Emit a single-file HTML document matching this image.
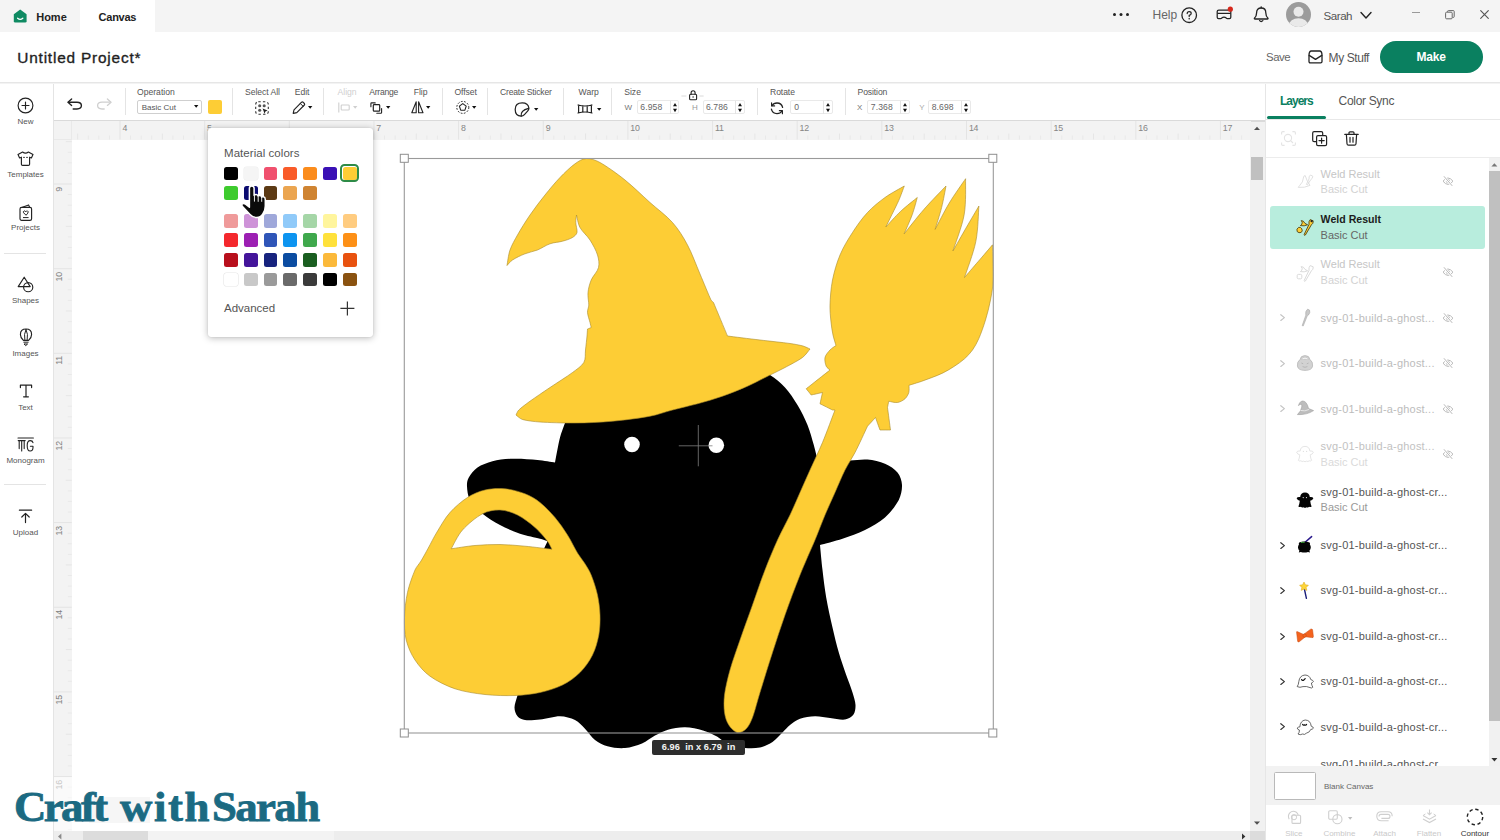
<!DOCTYPE html>
<html lang="en"><head><meta charset="utf-8"><title>Canvas</title>
<style>

html,body{margin:0;padding:0;background:#fff;}
body{width:1500px;height:840px;overflow:hidden;font-family:"Liberation Sans",sans-serif;}
#app{position:relative;width:1500px;height:840px;overflow:hidden;background:#fff;}
#art{position:absolute;left:0;top:0;}
svg{overflow:visible}
.ic{fill:none;stroke-linecap:round;stroke-linejoin:round}

</style></head><body>
<div id="app">
<div style="position:absolute;left:0px;top:0px;width:1500px;height:31.8px;background:#f4f4f4;"></div><div style="position:absolute;left:80px;top:0px;width:75px;height:32px;background:#fff;"></div><svg style="position:absolute;left:13px;top:8.8px;" width="14.5" height="14" viewBox="0 0 14.5 14"><path d="M7.2 0.6 L13.6 5.2 V12.2 Q13.6 13.6 12.2 13.6 H2.2 Q0.8 13.6 0.8 12.2 V5.2 Z" fill="#0f8a62"/><path d="M4.6 9.2 Q7.2 11.6 9.8 9.2" fill="none" stroke="#fff" stroke-width="1.3" stroke-linecap="round"/></svg><div style="position:absolute;left:36.2px;top:11.89px;font-size:11px;line-height:1;color:#222;font-weight:700;white-space:nowrap;">Home</div><div style="position:absolute;left:98.6px;top:11.89px;font-size:11px;line-height:1;color:#222;font-weight:700;white-space:nowrap;letter-spacing:-0.25px;">Canvas</div><svg style="position:absolute;left:1112px;top:12px;" width="18" height="5" viewBox="0 0 18 5"><circle cx="2.5" cy="2.5" r="1.5" fill="#222"/><circle cx="9" cy="2.5" r="1.5" fill="#222"/><circle cx="15.5" cy="2.5" r="1.5" fill="#222"/></svg><div style="position:absolute;left:1152.5px;top:9.34px;font-size:12px;line-height:1;color:#666;font-weight:400;white-space:nowrap;">Help</div><svg style="position:absolute;left:1180.5px;top:6.8px;" width="16.4" height="16.4" viewBox="0 0 16.4 16.4"><circle cx="8.2" cy="8.2" r="7.3" fill="none" stroke="#222" stroke-width="1.3"/><path d="M6.2 6.6 Q6.2 4.6 8.2 4.6 Q10.2 4.6 10.2 6.4 Q10.2 7.6 8.2 8.4 V9.6" fill="none" stroke="#222" stroke-width="1.2" stroke-linecap="round"/><circle cx="8.2" cy="11.7" r="0.8" fill="#222"/></svg><svg style="position:absolute;left:1215.5px;top:6px;" width="18" height="14" viewBox="0 0 18 14"><path d="M1.2 5.6 Q1.2 4 2.8 4 H13.2 Q14.8 4 14.8 5.6 V11.2 Q14.8 12.6 13.4 12.6 H11.6 Q10.6 12.6 10 11.8 Q9.2 11 8 11 Q6.8 11 6 11.8 Q5.4 12.6 4.4 12.6 H2.6 Q1.2 12.6 1.2 11.2 Z" fill="none" stroke="#222" stroke-width="1.25" stroke-linejoin="round"/><path d="M1.4 7.4 H14.6" stroke="#222" stroke-width="1.25"/><circle cx="14.3" cy="3.2" r="2.6" fill="#d6281c"/></svg><svg style="position:absolute;left:1253px;top:6px;" width="16.4" height="17" viewBox="0 0 16.4 17"><path d="M1.4 12.2 Q3.6 10.4 3.6 6.8 Q3.6 2 8.2 2 Q12.8 2 12.8 6.8 Q12.8 10.4 15 12.2 Q15.2 13 14.4 13 H2 Q1.2 13 1.4 12.2 Z" class="ic" stroke="#222" stroke-width="1.3"/><path d="M6.6 14.6 Q8.2 16.4 9.8 14.6" class="ic" stroke="#222" stroke-width="1.3"/><path d="M8.2 0.8 V1.8" class="ic" stroke="#222" stroke-width="1.3"/></svg><div style="position:absolute;left:1286px;top:1.8px;width:25px;height:25px;border-radius:50%;overflow:hidden;background:#9b9b9b;"><svg width="25" height="25" viewBox="0 0 25 25" style="position:absolute;left:0;top:0;"><g fill="#e9e9e9"><circle cx="12.5" cy="9.8" r="5"/><ellipse cx="12.5" cy="23.6" rx="9.6" ry="7.4"/></g></svg></div><div style="position:absolute;left:1323.6px;top:9.78px;font-size:11.6px;line-height:1;color:#555;font-weight:400;white-space:nowrap;letter-spacing:-0.5px;">Sarah</div><svg style="position:absolute;left:1359.5px;top:11px;" width="12" height="9" viewBox="0 0 12 9"><path d="M1 1.5 L6 7 L11 1.5" fill="none" stroke="#222" stroke-width="1.4" stroke-linecap="round" stroke-linejoin="round"/></svg><div style="position:absolute;left:1412px;top:12.4px;width:8px;height:1.1px;background:#9a9a9a;"></div><svg style="position:absolute;left:1445px;top:9.5px;" width="10" height="10" viewBox="0 0 10 10"><rect x="0.6" y="2.2" width="6.6" height="6.6" rx="1" fill="none" stroke="#666" stroke-width="1"/><path d="M2.6 2 V1.4 Q2.6 0.6 3.4 0.6 H8.4 Q9.2 0.6 9.2 1.4 V6.6 Q9.2 7.4 8.4 7.4 H7.6" fill="none" stroke="#666" stroke-width="1"/></svg><svg style="position:absolute;left:1480px;top:9.5px;" width="9" height="9" viewBox="0 0 9 9"><path d="M0.7 0.7 L8.3 8.3 M8.3 0.7 L0.7 8.3" stroke="#555" stroke-width="1.15" stroke-linecap="round"/></svg>
<div style="position:absolute;left:0px;top:32px;width:1500px;height:50px;background:#fff;"></div><div style="position:absolute;left:0px;top:81.5px;width:1500px;height:1.5px;background:#e6e6e6;"></div><div style="position:absolute;left:0px;top:83px;width:1500px;height:1px;background:#f3f3f3;"></div><div style="position:absolute;left:17.3px;top:49.56px;font-size:15.4px;line-height:1;color:#1f1f1f;font-weight:400;white-space:nowrap;-webkit-text-stroke:0.35px #1f1f1f;letter-spacing:0.8px;">Untitled Project*</div><div style="position:absolute;left:1266px;top:52.05px;font-size:11.4px;line-height:1;color:#666;font-weight:400;white-space:nowrap;letter-spacing:-0.45px;">Save</div><svg style="position:absolute;left:1308px;top:49.5px;" width="15" height="14" viewBox="0 0 15 14"><path d="M1 5.2 Q1 1 3.4 1 H11.6 Q14 1 14 5.2 V11.4 Q14 12.8 12.6 12.8 H2.4 Q1 12.8 1 11.4 Z" class="ic" stroke="#222" stroke-width="1.3"/><path d="M1.2 5.4 L7.5 9.4 L13.8 5.4" class="ic" stroke="#222" stroke-width="1.3"/></svg><div style="position:absolute;left:1328.6px;top:51.54px;font-size:12px;line-height:1;color:#555;font-weight:400;white-space:nowrap;letter-spacing:-0.42px;">My Stuff</div><div style="position:absolute;left:1379.5px;top:41.2px;width:103.5px;height:31.4px;background:#0a8060;border-radius:16px;"></div><div style="position:absolute;left:1431.2px;transform:translateX(-50%);top:51.04px;font-size:12px;line-height:1;color:#fff;font-weight:700;white-space:nowrap;letter-spacing:-0.2px;">Make</div>
<div style="position:absolute;left:0px;top:84px;width:1500px;height:36px;background:#fff;"></div><div style="position:absolute;left:53px;top:120px;width:1212px;height:1.8px;background:#dadada;"></div><svg style="position:absolute;left:67px;top:97.5px;" width="16" height="12" viewBox="0 0 16 12"><path d="M4.6 1 L1 4.2 L4.6 7.4" class="ic" stroke="#222" stroke-width="1.4"/><path d="M1.4 4.2 H10 Q14.4 4.2 14.4 7.6 Q14.4 11 10 11 H6.2" class="ic" stroke="#222" stroke-width="1.4"/></svg><svg style="position:absolute;left:96px;top:97.5px;" width="16" height="12" viewBox="0 0 16 12"><path d="M11.4 1 L15 4.2 L11.4 7.4" class="ic" stroke="#cfcfcf" stroke-width="1.3"/><path d="M14.6 4.2 H6 Q1.6 4.2 1.6 7.6 Q1.6 11 6 11 H8.2" class="ic" stroke="#cfcfcf" stroke-width="1.3"/></svg><div style="position:absolute;left:124.5px;top:88px;width:1px;height:27px;background:#e4e4e4;"></div><div style="position:absolute;left:137px;top:88.02px;font-size:8.6px;line-height:1;color:#555;font-weight:400;white-space:nowrap;">Operation</div><div style="position:absolute;left:136.7px;top:99.8px;width:65.8px;height:14.2px;box-sizing:border-box;border:1px solid #cfcfcf;border-radius:2px;background:#fff;"></div><div style="position:absolute;left:141.7px;top:103.53px;font-size:8px;line-height:1;color:#555;font-weight:400;white-space:nowrap;">Basic Cut</div><svg style="position:absolute;left:194.10000000000002px;top:105.10000000000001px;" width="4.4" height="2.8" viewBox="0 0 4.4 2.8"><path d="M0 0 H4.4 L2.2 2.8 Z" fill="#111"/></svg><div style="position:absolute;left:207.5px;top:99.8px;width:14.2px;height:14.2px;background:#fdcd35;border-radius:2px;"></div><div style="position:absolute;left:232.0px;top:88px;width:1px;height:27px;background:#e4e4e4;"></div><div style="position:absolute;left:245px;top:88.02px;font-size:8.6px;line-height:1;color:#555;font-weight:400;white-space:nowrap;letter-spacing:-0.05px;">Select All</div><svg style="position:absolute;left:255px;top:100.5px;" width="15" height="14.5" viewBox="0 0 15 14.5"><rect x="0.7" y="0.7" width="12.6" height="12.6" rx="2.6" fill="none" stroke="#333" stroke-width="1.1" stroke-dasharray="2.4 2.2"/><circle cx="4.7" cy="4.7" r="1.55" fill="#555"/><circle cx="9.2" cy="4.7" r="1.55" fill="#555"/><circle cx="4.7" cy="9.2" r="1.55" fill="#555"/><path d="M7.6 7.6 L12.6 9.6 L10.4 10.6 L9.6 12.8 Z" fill="#222"/></svg><div style="position:absolute;left:294.7px;top:88.02px;font-size:8.6px;line-height:1;color:#555;font-weight:400;white-space:nowrap;">Edit</div><svg style="position:absolute;left:292px;top:100.5px;" width="14" height="13.5" viewBox="0 0 14 13.5"><path d="M1.2 12.4 L2 8.8 L9.6 1.2 Q10.4 0.6 11.2 1.3 L12.4 2.5 Q13 3.3 12.4 4 L4.8 11.6 Z" class="ic" stroke="#222" stroke-width="1.15"/><path d="M8.4 2.6 L11 5.2" class="ic" stroke="#222" stroke-width="1"/></svg><svg style="position:absolute;left:308.1px;top:106.0px;" width="4.4" height="2.8" viewBox="0 0 4.4 2.8"><path d="M0 0 H4.4 L2.2 2.8 Z" fill="#111"/></svg><div style="position:absolute;left:322.8px;top:88px;width:1px;height:27px;background:#e4e4e4;"></div><div style="position:absolute;left:337.5px;top:88.02px;font-size:8.6px;line-height:1;color:#cfcfcf;font-weight:400;white-space:nowrap;">Align</div><svg style="position:absolute;left:338px;top:102px;" width="13" height="11" viewBox="0 0 13 11"><path d="M0.8 0.6 V10.4" stroke="#cfcfcf" stroke-width="1.1" fill="none"/><rect x="3.2" y="3" width="8" height="5" rx="0.8" fill="none" stroke="#cfcfcf" stroke-width="1.1"/></svg><svg style="position:absolute;left:352.8px;top:106.0px;" width="4.4" height="2.8" viewBox="0 0 4.4 2.8"><path d="M0 0 H4.4 L2.2 2.8 Z" fill="#cfcfcf"/></svg><div style="position:absolute;left:369.2px;top:88.02px;font-size:8.6px;line-height:1;color:#555;font-weight:400;white-space:nowrap;letter-spacing:-0.25px;">Arrange</div><svg style="position:absolute;left:370px;top:101.8px;" width="13" height="12.4" viewBox="0 0 13 12.4"><path d="M0.9 4.8 V1.6 Q0.9 0.9 1.6 0.9 H5.2" class="ic" stroke="#222" stroke-width="1.1"/><path d="M6.8 11.3 H10.9 Q11.6 11.3 11.6 10.6 V6.6" class="ic" stroke="#222" stroke-width="1.1"/><rect x="3.3" y="2.7" width="6.4" height="6.4" rx="0.9" class="ic" style="fill:#fff" stroke="#222" stroke-width="1.2" fill="#fff"/></svg><svg style="position:absolute;left:385.8px;top:106.0px;" width="4.4" height="2.8" viewBox="0 0 4.4 2.8"><path d="M0 0 H4.4 L2.2 2.8 Z" fill="#111"/></svg><div style="position:absolute;left:413.7px;top:88.02px;font-size:8.6px;line-height:1;color:#555;font-weight:400;white-space:nowrap;">Flip</div><svg style="position:absolute;left:410.5px;top:101.3px;" width="13" height="12.6" viewBox="0 0 13 12.6"><path d="M5.2 0.8 L0.8 11.8 H5.2 Z" class="ic" stroke="#222" stroke-width="1.1"/><path d="M7.6 0.8 L12 11.8 H7.6 Z" class="ic" stroke="#222" stroke-width="1.1"/></svg><svg style="position:absolute;left:426.1px;top:106.0px;" width="4.4" height="2.8" viewBox="0 0 4.4 2.8"><path d="M0 0 H4.4 L2.2 2.8 Z" fill="#111"/></svg><div style="position:absolute;left:441.5px;top:88px;width:1px;height:27px;background:#e4e4e4;"></div><div style="position:absolute;left:454.5px;top:88.02px;font-size:8.6px;line-height:1;color:#555;font-weight:400;white-space:nowrap;letter-spacing:-0.1px;">Offset</div><svg style="position:absolute;left:455.5px;top:100.4px;" width="13.6" height="14" viewBox="0 0 13.6 14"><circle cx="6.8" cy="7.4" r="6" fill="none" stroke="#222" stroke-width="1" stroke-dasharray="1.7 1.5"/><path d="M6.8 3.6 L10.2 6.1 L8.9 10.2 H4.7 L3.4 6.1 Z" class="ic" stroke="#222" stroke-width="1.1"/></svg><svg style="position:absolute;left:471.6px;top:106.0px;" width="4.4" height="2.8" viewBox="0 0 4.4 2.8"><path d="M0 0 H4.4 L2.2 2.8 Z" fill="#111"/></svg><div style="position:absolute;left:487.0px;top:88px;width:1px;height:27px;background:#e4e4e4;"></div><div style="position:absolute;left:500px;top:88.02px;font-size:8.6px;line-height:1;color:#555;font-weight:400;white-space:nowrap;letter-spacing:-0.2px;">Create Sticker</div><svg style="position:absolute;left:514.4px;top:101.7px;" width="16.4" height="15.2" viewBox="0 0 16.4 15.2"><path d="M14.9 6.2 Q14.2 1 8.2 1 Q1.2 1 1.2 7.6 Q1.2 14 7.2 14.2 Q9 14.2 10.4 12.6 L13.6 9.2 Q14.9 7.8 14.9 6.2 Z" class="ic" stroke="#222" stroke-width="1.25"/><path d="M7.2 14.2 Q6.2 8.4 14.6 6.4" class="ic" stroke="#222" stroke-width="1.15"/></svg><svg style="position:absolute;left:534.1999999999999px;top:107.5px;" width="4.4" height="2.8" viewBox="0 0 4.4 2.8"><path d="M0 0 H4.4 L2.2 2.8 Z" fill="#111"/></svg><div style="position:absolute;left:562.8px;top:88px;width:1px;height:27px;background:#e4e4e4;"></div><div style="position:absolute;left:578.6px;top:88.02px;font-size:8.6px;line-height:1;color:#555;font-weight:400;white-space:nowrap;">Warp</div><svg style="position:absolute;left:577px;top:104px;" width="16" height="10" viewBox="0 0 16 10"><path d="M1 1 Q8 3 15 1 M1 9 Q8 7 15 9 M1.6 1 V9 M5.8 1.9 V8.1 M10.2 1.9 V8.1 M14.4 1 V9" class="ic" stroke="#222" stroke-width="1.2"/></svg><svg style="position:absolute;left:596.5999999999999px;top:107.7px;" width="4.4" height="2.8" viewBox="0 0 4.4 2.8"><path d="M0 0 H4.4 L2.2 2.8 Z" fill="#111"/></svg><div style="position:absolute;left:611.2px;top:88px;width:1px;height:27px;background:#e4e4e4;"></div><div style="position:absolute;left:624.2px;top:88.02px;font-size:8.6px;line-height:1;color:#555;font-weight:400;white-space:nowrap;">Size</div><div style="position:absolute;left:624.6px;top:103.53px;font-size:8px;line-height:1;color:#777;font-weight:400;white-space:nowrap;">W</div><div style="position:absolute;left:636.7px;top:100px;width:42.6px;height:14px;box-sizing:border-box;border:1px solid #e9e9e9;border-radius:2px;background:#fff;"></div><div style="position:absolute;left:640.3px;top:103.12px;font-size:8.6px;line-height:1;color:#666;font-weight:400;white-space:nowrap;letter-spacing:0.1px;">6.958</div><div style="position:absolute;left:669.6px;top:100.5px;width:0.8px;height:13px;background:#e3e3e3;"></div><svg style="position:absolute;left:672.6px;top:102.6px;" width="4" height="9.4" viewBox="0 0 4 9.4"><path d="M2 0 L4 3.3 H0 Z M0 5.8 H4 L2 9.2 Z" fill="#111"/></svg><svg style="position:absolute;left:681px;top:90px;" width="23" height="10.5" viewBox="0 0 23 10.5"><path d="M0.4 6 H5.4 M18.4 6 H22.6" stroke="#d0d0d0" stroke-width="0.8" fill="none"/><rect x="8.6" y="4.2" width="7" height="5.6" rx="1.1" class="ic" style="fill:#fff" stroke="#222" stroke-width="1.1" fill="#fff"/><path d="M10.1 4.2 V2.8 Q10.1 0.7 12.1 0.7 Q14.1 0.7 14.1 2.8 V4.2" class="ic" stroke="#222" stroke-width="1.1"/><circle cx="12.1" cy="7" r="0.7" fill="#222"/></svg><div style="position:absolute;left:692px;top:103.53px;font-size:8px;line-height:1;color:#999;font-weight:400;white-space:nowrap;">H</div><div style="position:absolute;left:702.5px;top:100px;width:42.6px;height:14px;box-sizing:border-box;border:1px solid #e9e9e9;border-radius:2px;background:#fff;"></div><div style="position:absolute;left:705.9px;top:103.12px;font-size:8.6px;line-height:1;color:#666;font-weight:400;white-space:nowrap;letter-spacing:0.1px;">6.786</div><div style="position:absolute;left:735.4px;top:100.5px;width:0.8px;height:13px;background:#e3e3e3;"></div><svg style="position:absolute;left:738.4px;top:102.6px;" width="4" height="9.4" viewBox="0 0 4 9.4"><path d="M2 0 L4 3.3 H0 Z M0 5.8 H4 L2 9.2 Z" fill="#111"/></svg><div style="position:absolute;left:757.1px;top:88px;width:1px;height:27px;background:#e4e4e4;"></div><div style="position:absolute;left:770px;top:88.02px;font-size:8.6px;line-height:1;color:#555;font-weight:400;white-space:nowrap;letter-spacing:-0.08px;">Rotate</div><svg style="position:absolute;left:770.4px;top:101.6px;" width="14" height="12.6" viewBox="0 0 14 12.6"><path d="M12.6 5.4 Q11.6 1 7 1 Q3.6 1 2 3.6" class="ic" stroke="#222" stroke-width="1.3"/><path d="M1.6 0.9 V3.9 H4.6" class="ic" stroke="#222" stroke-width="1.2"/><path d="M1.4 7.2 Q2.4 11.6 7 11.6 Q10.4 11.6 12 9" class="ic" stroke="#222" stroke-width="1.3"/><path d="M12.4 11.7 V8.7 H9.4" class="ic" stroke="#222" stroke-width="1.2"/></svg><div style="position:absolute;left:790px;top:100px;width:42.6px;height:14px;box-sizing:border-box;border:1px solid #e9e9e9;border-radius:2px;background:#fff;"></div><div style="position:absolute;left:794.3px;top:103.12px;font-size:8.6px;line-height:1;color:#666;font-weight:400;white-space:nowrap;letter-spacing:0.1px;">0</div><div style="position:absolute;left:822.9px;top:100.5px;width:0.8px;height:13px;background:#e3e3e3;"></div><svg style="position:absolute;left:825.9px;top:102.6px;" width="4" height="9.4" viewBox="0 0 4 9.4"><path d="M2 0 L4 3.3 H0 Z M0 5.8 H4 L2 9.2 Z" fill="#111"/></svg><div style="position:absolute;left:844.5px;top:88px;width:1px;height:27px;background:#e4e4e4;"></div><div style="position:absolute;left:857.5px;top:88.02px;font-size:8.6px;line-height:1;color:#555;font-weight:400;white-space:nowrap;letter-spacing:-0.1px;">Position</div><div style="position:absolute;left:857px;top:103.53px;font-size:8px;line-height:1;color:#777;font-weight:400;white-space:nowrap;">X</div><div style="position:absolute;left:866.8px;top:100px;width:43.2px;height:14px;box-sizing:border-box;border:1px solid #e9e9e9;border-radius:2px;background:#fff;"></div><div style="position:absolute;left:870.8px;top:103.12px;font-size:8.6px;line-height:1;color:#666;font-weight:400;white-space:nowrap;letter-spacing:0.1px;">7.368</div><div style="position:absolute;left:900.3px;top:100.5px;width:0.8px;height:13px;background:#e3e3e3;"></div><svg style="position:absolute;left:903.3px;top:102.6px;" width="4" height="9.4" viewBox="0 0 4 9.4"><path d="M2 0 L4 3.3 H0 Z M0 5.8 H4 L2 9.2 Z" fill="#111"/></svg><div style="position:absolute;left:919.2px;top:103.53px;font-size:8px;line-height:1;color:#aaa;font-weight:400;white-space:nowrap;">Y</div><div style="position:absolute;left:927.6px;top:100px;width:43.2px;height:14px;box-sizing:border-box;border:1px solid #e9e9e9;border-radius:2px;background:#fff;"></div><div style="position:absolute;left:931.7px;top:103.12px;font-size:8.6px;line-height:1;color:#666;font-weight:400;white-space:nowrap;letter-spacing:0.1px;">8.698</div><div style="position:absolute;left:961.1px;top:100.5px;width:0.8px;height:13px;background:#e3e3e3;"></div><svg style="position:absolute;left:964.1px;top:102.6px;" width="4" height="9.4" viewBox="0 0 4 9.4"><path d="M2 0 L4 3.3 H0 Z M0 5.8 H4 L2 9.2 Z" fill="#111"/></svg>
<div style="position:absolute;left:0px;top:84px;width:52.5px;height:756px;background:#fff;"></div><div style="position:absolute;left:52.5px;top:84px;width:1px;height:756px;background:#e4e4e4;"></div><svg style="position:absolute;left:17px;top:97px;" width="17" height="17" viewBox="0 0 17 17"><circle cx="8.5" cy="8.5" r="7.4" class="ic" stroke="#222" stroke-width="1.15"/><path d="M8.5 5 V12 M5 8.5 H12" class="ic" stroke="#222" stroke-width="1.15"/></svg><div style="position:absolute;left:25.5px;transform:translateX(-50%);top:118.03px;font-size:8px;line-height:1;color:#555;font-weight:400;white-space:nowrap;">New</div><svg style="position:absolute;left:17px;top:151px;" width="17" height="15.4" viewBox="0 0 17 15.4"><path d="M5.6 1 Q8.5 3.4 11.4 1 L16 3.6 L14.4 7 L12.6 6.2 V13.2 Q12.6 14.4 11.4 14.4 H5.6 Q4.4 14.4 4.4 13.2 V6.2 L2.6 7 L1 3.6 Z" class="ic" stroke="#222" stroke-width="1.15"/><path d="M6.6 6.4 H7.4 M9.6 6.4 H10.4" class="ic" stroke="#222" stroke-width="1"/></svg><div style="position:absolute;left:25.5px;transform:translateX(-50%);top:171.43px;font-size:8px;line-height:1;color:#555;font-weight:400;white-space:nowrap;">Templates</div><svg style="position:absolute;left:18.5px;top:203.5px;" width="14" height="17.4" viewBox="0 0 14 17.4"><rect x="1" y="3.4" width="11.6" height="13" rx="1.6" class="ic" stroke="#222" stroke-width="1.15"/><path d="M3.4 3.2 L9.6 0.9 L10.6 3.2" class="ic" stroke="#222" stroke-width="1.05"/><path d="M6.8 11 L4.6 8.8 Q3.8 7.4 5.2 6.9 Q6.2 6.7 6.8 7.8 Q7.4 6.7 8.4 6.9 Q9.8 7.4 9 8.8 Z" class="ic" stroke="#222" stroke-width="1"/><path d="M4.4 13.6 H9.2" class="ic" stroke="#222" stroke-width="1"/></svg><div style="position:absolute;left:25.5px;transform:translateX(-50%);top:224.43px;font-size:8px;line-height:1;color:#555;font-weight:400;white-space:nowrap;">Projects</div><div style="position:absolute;left:4px;top:253.4px;width:42px;height:1px;background:#e4e4e4;"></div><svg style="position:absolute;left:17px;top:275.5px;" width="17.4" height="17" viewBox="0 0 17.4 17"><path d="M7.2 1.2 L13.2 10.6 H1.2 Z" class="ic" stroke="#222" stroke-width="1.15"/><circle cx="11.2" cy="11.2" r="4.6" class="ic" stroke="#222" stroke-width="1.15"/></svg><div style="position:absolute;left:25.5px;transform:translateX(-50%);top:297.23px;font-size:8px;line-height:1;color:#555;font-weight:400;white-space:nowrap;">Shapes</div><svg style="position:absolute;left:18.5px;top:327.5px;" width="14" height="18.4" viewBox="0 0 14 18.4"><path d="M7 1 Q12.6 1 12.6 6.4 Q12.6 9.6 9.6 12.4 H4.4 Q1.4 9.6 1.4 6.4 Q1.4 1 7 1 Z" class="ic" stroke="#222" stroke-width="1.15"/><path d="M7 1.4 Q4.6 6 5.8 12.2 M7 1.4 Q9.4 6 8.2 12.2" class="ic" stroke="#222" stroke-width="1"/><path d="M4.8 14.2 H9.2 M5.4 16 H8.6 L7 17.4 Z" class="ic" stroke="#222" stroke-width="1"/></svg><div style="position:absolute;left:25.5px;transform:translateX(-50%);top:350.43px;font-size:8px;line-height:1;color:#555;font-weight:400;white-space:nowrap;">Images</div><svg style="position:absolute;left:18.5px;top:384px;" width="14" height="14" viewBox="0 0 14 14"><path d="M1.4 3.6 V1.2 H12.6 V3.6 M7 1.2 V12.6 M4.6 12.8 H9.4" class="ic" stroke="#222" stroke-width="1.2"/></svg><div style="position:absolute;left:25.5px;transform:translateX(-50%);top:403.53px;font-size:8px;line-height:1;color:#555;font-weight:400;white-space:nowrap;">Text</div><svg style="position:absolute;left:17px;top:436.5px;" width="17.4" height="15.4" viewBox="0 0 17.4 15.4"><path d="M1 1 H16.4" class="ic" stroke="#222" stroke-width="1.1"/><path d="M1.2 3.6 H8.2 M2.2 3.6 V11.6 M4.7 3.6 V14 M7.2 3.6 V11.6" class="ic" stroke="#222" stroke-width="1.1"/><path d="M16 5.6 Q15.6 3.6 13.2 3.6 Q10.2 3.6 10.2 8.6 Q10.2 14 13.2 14 Q16 14 16 10.6 V9.2 H13.4" class="ic" stroke="#222" stroke-width="1.1"/></svg><div style="position:absolute;left:25.5px;transform:translateX(-50%);top:457.03px;font-size:8px;line-height:1;color:#555;font-weight:400;white-space:nowrap;">Monogram</div><div style="position:absolute;left:4px;top:484px;width:42px;height:1px;background:#e4e4e4;"></div><svg style="position:absolute;left:18px;top:508.5px;" width="15" height="15" viewBox="0 0 15 15"><path d="M1.4 1.2 H13.6" class="ic" stroke="#222" stroke-width="1.2"/><path d="M7.5 13.6 V4.6 M3.8 8 L7.5 4.4 L11.2 8" class="ic" stroke="#222" stroke-width="1.2"/></svg><div style="position:absolute;left:25.5px;transform:translateX(-50%);top:529.03px;font-size:8px;line-height:1;color:#555;font-weight:400;white-space:nowrap;">Upload</div>
<div style="position:absolute;left:53.5px;top:121px;width:1197px;height:18.5px;background:#f3f3f3;"></div><svg style="position:absolute;left:0px;top:0px;pointer-events:none;" width="1500" height="140" viewBox="0 0 1500 140"><rect x="77.17" y="133.5" width="1" height="6.0" fill="#e6e6e6"/><rect x="87.76" y="135.5" width="1" height="4.0" fill="#e9e9e9"/><rect x="98.34" y="135.5" width="1" height="4.0" fill="#e9e9e9"/><rect x="108.92" y="135.5" width="1" height="4.0" fill="#e9e9e9"/><rect x="119.50" y="121" width="1" height="18.5" fill="#e4e4e4"/><rect x="130.08" y="135.5" width="1" height="4.0" fill="#e9e9e9"/><rect x="140.66" y="135.5" width="1" height="4.0" fill="#e9e9e9"/><rect x="151.24" y="135.5" width="1" height="4.0" fill="#e9e9e9"/><rect x="161.82" y="133.5" width="1" height="6.0" fill="#e6e6e6"/><rect x="172.41" y="135.5" width="1" height="4.0" fill="#e9e9e9"/><rect x="182.99" y="135.5" width="1" height="4.0" fill="#e9e9e9"/><rect x="193.57" y="135.5" width="1" height="4.0" fill="#e9e9e9"/><rect x="204.15" y="121" width="1" height="18.5" fill="#e4e4e4"/><rect x="214.73" y="135.5" width="1" height="4.0" fill="#e9e9e9"/><rect x="225.31" y="135.5" width="1" height="4.0" fill="#e9e9e9"/><rect x="235.89" y="135.5" width="1" height="4.0" fill="#e9e9e9"/><rect x="246.48" y="133.5" width="1" height="6.0" fill="#e6e6e6"/><rect x="257.06" y="135.5" width="1" height="4.0" fill="#e9e9e9"/><rect x="267.64" y="135.5" width="1" height="4.0" fill="#e9e9e9"/><rect x="278.22" y="135.5" width="1" height="4.0" fill="#e9e9e9"/><rect x="288.80" y="121" width="1" height="18.5" fill="#e4e4e4"/><rect x="299.38" y="135.5" width="1" height="4.0" fill="#e9e9e9"/><rect x="309.96" y="135.5" width="1" height="4.0" fill="#e9e9e9"/><rect x="320.54" y="135.5" width="1" height="4.0" fill="#e9e9e9"/><rect x="331.12" y="133.5" width="1" height="6.0" fill="#e6e6e6"/><rect x="341.71" y="135.5" width="1" height="4.0" fill="#e9e9e9"/><rect x="352.29" y="135.5" width="1" height="4.0" fill="#e9e9e9"/><rect x="362.87" y="135.5" width="1" height="4.0" fill="#e9e9e9"/><rect x="373.45" y="121" width="1" height="18.5" fill="#e4e4e4"/><rect x="384.03" y="135.5" width="1" height="4.0" fill="#e9e9e9"/><rect x="394.61" y="135.5" width="1" height="4.0" fill="#e9e9e9"/><rect x="405.19" y="135.5" width="1" height="4.0" fill="#e9e9e9"/><rect x="415.78" y="133.5" width="1" height="6.0" fill="#e6e6e6"/><rect x="426.36" y="135.5" width="1" height="4.0" fill="#e9e9e9"/><rect x="436.94" y="135.5" width="1" height="4.0" fill="#e9e9e9"/><rect x="447.52" y="135.5" width="1" height="4.0" fill="#e9e9e9"/><rect x="458.10" y="121" width="1" height="18.5" fill="#e4e4e4"/><rect x="468.68" y="135.5" width="1" height="4.0" fill="#e9e9e9"/><rect x="479.26" y="135.5" width="1" height="4.0" fill="#e9e9e9"/><rect x="489.84" y="135.5" width="1" height="4.0" fill="#e9e9e9"/><rect x="500.43" y="133.5" width="1" height="6.0" fill="#e6e6e6"/><rect x="511.01" y="135.5" width="1" height="4.0" fill="#e9e9e9"/><rect x="521.59" y="135.5" width="1" height="4.0" fill="#e9e9e9"/><rect x="532.17" y="135.5" width="1" height="4.0" fill="#e9e9e9"/><rect x="542.75" y="121" width="1" height="18.5" fill="#e4e4e4"/><rect x="553.33" y="135.5" width="1" height="4.0" fill="#e9e9e9"/><rect x="563.91" y="135.5" width="1" height="4.0" fill="#e9e9e9"/><rect x="574.49" y="135.5" width="1" height="4.0" fill="#e9e9e9"/><rect x="585.08" y="133.5" width="1" height="6.0" fill="#e6e6e6"/><rect x="595.66" y="135.5" width="1" height="4.0" fill="#e9e9e9"/><rect x="606.24" y="135.5" width="1" height="4.0" fill="#e9e9e9"/><rect x="616.82" y="135.5" width="1" height="4.0" fill="#e9e9e9"/><rect x="627.40" y="121" width="1" height="18.5" fill="#e4e4e4"/><rect x="637.98" y="135.5" width="1" height="4.0" fill="#e9e9e9"/><rect x="648.56" y="135.5" width="1" height="4.0" fill="#e9e9e9"/><rect x="659.14" y="135.5" width="1" height="4.0" fill="#e9e9e9"/><rect x="669.73" y="133.5" width="1" height="6.0" fill="#e6e6e6"/><rect x="680.31" y="135.5" width="1" height="4.0" fill="#e9e9e9"/><rect x="690.89" y="135.5" width="1" height="4.0" fill="#e9e9e9"/><rect x="701.47" y="135.5" width="1" height="4.0" fill="#e9e9e9"/><rect x="712.05" y="121" width="1" height="18.5" fill="#e4e4e4"/><rect x="722.63" y="135.5" width="1" height="4.0" fill="#e9e9e9"/><rect x="733.21" y="135.5" width="1" height="4.0" fill="#e9e9e9"/><rect x="743.79" y="135.5" width="1" height="4.0" fill="#e9e9e9"/><rect x="754.38" y="133.5" width="1" height="6.0" fill="#e6e6e6"/><rect x="764.96" y="135.5" width="1" height="4.0" fill="#e9e9e9"/><rect x="775.54" y="135.5" width="1" height="4.0" fill="#e9e9e9"/><rect x="786.12" y="135.5" width="1" height="4.0" fill="#e9e9e9"/><rect x="796.70" y="121" width="1" height="18.5" fill="#e4e4e4"/><rect x="807.28" y="135.5" width="1" height="4.0" fill="#e9e9e9"/><rect x="817.86" y="135.5" width="1" height="4.0" fill="#e9e9e9"/><rect x="828.44" y="135.5" width="1" height="4.0" fill="#e9e9e9"/><rect x="839.03" y="133.5" width="1" height="6.0" fill="#e6e6e6"/><rect x="849.61" y="135.5" width="1" height="4.0" fill="#e9e9e9"/><rect x="860.19" y="135.5" width="1" height="4.0" fill="#e9e9e9"/><rect x="870.77" y="135.5" width="1" height="4.0" fill="#e9e9e9"/><rect x="881.35" y="121" width="1" height="18.5" fill="#e4e4e4"/><rect x="891.93" y="135.5" width="1" height="4.0" fill="#e9e9e9"/><rect x="902.51" y="135.5" width="1" height="4.0" fill="#e9e9e9"/><rect x="913.09" y="135.5" width="1" height="4.0" fill="#e9e9e9"/><rect x="923.68" y="133.5" width="1" height="6.0" fill="#e6e6e6"/><rect x="934.26" y="135.5" width="1" height="4.0" fill="#e9e9e9"/><rect x="944.84" y="135.5" width="1" height="4.0" fill="#e9e9e9"/><rect x="955.42" y="135.5" width="1" height="4.0" fill="#e9e9e9"/><rect x="966.00" y="121" width="1" height="18.5" fill="#e4e4e4"/><rect x="976.58" y="135.5" width="1" height="4.0" fill="#e9e9e9"/><rect x="987.16" y="135.5" width="1" height="4.0" fill="#e9e9e9"/><rect x="997.74" y="135.5" width="1" height="4.0" fill="#e9e9e9"/><rect x="1008.33" y="133.5" width="1" height="6.0" fill="#e6e6e6"/><rect x="1018.91" y="135.5" width="1" height="4.0" fill="#e9e9e9"/><rect x="1029.49" y="135.5" width="1" height="4.0" fill="#e9e9e9"/><rect x="1040.07" y="135.5" width="1" height="4.0" fill="#e9e9e9"/><rect x="1050.65" y="121" width="1" height="18.5" fill="#e4e4e4"/><rect x="1061.23" y="135.5" width="1" height="4.0" fill="#e9e9e9"/><rect x="1071.81" y="135.5" width="1" height="4.0" fill="#e9e9e9"/><rect x="1082.39" y="135.5" width="1" height="4.0" fill="#e9e9e9"/><rect x="1092.97" y="133.5" width="1" height="6.0" fill="#e6e6e6"/><rect x="1103.56" y="135.5" width="1" height="4.0" fill="#e9e9e9"/><rect x="1114.14" y="135.5" width="1" height="4.0" fill="#e9e9e9"/><rect x="1124.72" y="135.5" width="1" height="4.0" fill="#e9e9e9"/><rect x="1135.30" y="121" width="1" height="18.5" fill="#e4e4e4"/><rect x="1145.88" y="135.5" width="1" height="4.0" fill="#e9e9e9"/><rect x="1156.46" y="135.5" width="1" height="4.0" fill="#e9e9e9"/><rect x="1167.04" y="135.5" width="1" height="4.0" fill="#e9e9e9"/><rect x="1177.62" y="133.5" width="1" height="6.0" fill="#e6e6e6"/><rect x="1188.21" y="135.5" width="1" height="4.0" fill="#e9e9e9"/><rect x="1198.79" y="135.5" width="1" height="4.0" fill="#e9e9e9"/><rect x="1209.37" y="135.5" width="1" height="4.0" fill="#e9e9e9"/><rect x="1219.95" y="121" width="1" height="18.5" fill="#e4e4e4"/><rect x="1230.53" y="135.5" width="1" height="4.0" fill="#e9e9e9"/><rect x="1241.11" y="135.5" width="1" height="4.0" fill="#e9e9e9"/></svg><div style="position:absolute;left:122.39999999999999px;top:123.95px;font-size:8.8px;line-height:1;color:#858585;font-weight:400;white-space:nowrap;letter-spacing:-0.2px;">4</div><div style="position:absolute;left:207.05px;top:123.95px;font-size:8.8px;line-height:1;color:#858585;font-weight:400;white-space:nowrap;letter-spacing:-0.2px;">5</div><div style="position:absolute;left:376.3500000000001px;top:123.95px;font-size:8.8px;line-height:1;color:#858585;font-weight:400;white-space:nowrap;letter-spacing:-0.2px;">7</div><div style="position:absolute;left:461.00000000000006px;top:123.95px;font-size:8.8px;line-height:1;color:#858585;font-weight:400;white-space:nowrap;letter-spacing:-0.2px;">8</div><div style="position:absolute;left:545.65px;top:123.95px;font-size:8.8px;line-height:1;color:#858585;font-weight:400;white-space:nowrap;letter-spacing:-0.2px;">9</div><div style="position:absolute;left:630.3000000000001px;top:123.95px;font-size:8.8px;line-height:1;color:#858585;font-weight:400;white-space:nowrap;letter-spacing:-0.2px;">10</div><div style="position:absolute;left:714.95px;top:123.95px;font-size:8.8px;line-height:1;color:#858585;font-weight:400;white-space:nowrap;letter-spacing:-0.2px;">11</div><div style="position:absolute;left:799.6px;top:123.95px;font-size:8.8px;line-height:1;color:#858585;font-weight:400;white-space:nowrap;letter-spacing:-0.2px;">12</div><div style="position:absolute;left:884.25px;top:123.95px;font-size:8.8px;line-height:1;color:#858585;font-weight:400;white-space:nowrap;letter-spacing:-0.2px;">13</div><div style="position:absolute;left:968.9px;top:123.95px;font-size:8.8px;line-height:1;color:#858585;font-weight:400;white-space:nowrap;letter-spacing:-0.2px;">14</div><div style="position:absolute;left:1053.55px;top:123.95px;font-size:8.8px;line-height:1;color:#858585;font-weight:400;white-space:nowrap;letter-spacing:-0.2px;">15</div><div style="position:absolute;left:1138.2px;top:123.95px;font-size:8.8px;line-height:1;color:#858585;font-weight:400;white-space:nowrap;letter-spacing:-0.2px;">16</div><div style="position:absolute;left:1222.85px;top:123.95px;font-size:8.8px;line-height:1;color:#858585;font-weight:400;white-space:nowrap;letter-spacing:-0.2px;">17</div><div style="position:absolute;left:53.5px;top:121px;width:18.3px;height:709.5px;background:#f3f3f3;"></div><svg style="position:absolute;left:0px;top:0px;" width="80" height="840" viewBox="0 0 80 840"><rect x="65.8" y="141.18" width="6.0" height="1" fill="#e6e6e6"/><rect x="67.8" y="151.76" width="4.0" height="1" fill="#e9e9e9"/><rect x="67.8" y="162.34" width="4.0" height="1" fill="#e9e9e9"/><rect x="67.8" y="172.92" width="4.0" height="1" fill="#e9e9e9"/><rect x="53.5" y="183.50" width="18.3" height="1" fill="#e4e4e4"/><rect x="67.8" y="194.08" width="4.0" height="1" fill="#e9e9e9"/><rect x="67.8" y="204.66" width="4.0" height="1" fill="#e9e9e9"/><rect x="67.8" y="215.24" width="4.0" height="1" fill="#e9e9e9"/><rect x="65.8" y="225.82" width="6.0" height="1" fill="#e6e6e6"/><rect x="67.8" y="236.41" width="4.0" height="1" fill="#e9e9e9"/><rect x="67.8" y="246.99" width="4.0" height="1" fill="#e9e9e9"/><rect x="67.8" y="257.57" width="4.0" height="1" fill="#e9e9e9"/><rect x="53.5" y="268.15" width="18.3" height="1" fill="#e4e4e4"/><rect x="67.8" y="278.73" width="4.0" height="1" fill="#e9e9e9"/><rect x="67.8" y="289.31" width="4.0" height="1" fill="#e9e9e9"/><rect x="67.8" y="299.89" width="4.0" height="1" fill="#e9e9e9"/><rect x="65.8" y="310.48" width="6.0" height="1" fill="#e6e6e6"/><rect x="67.8" y="321.06" width="4.0" height="1" fill="#e9e9e9"/><rect x="67.8" y="331.64" width="4.0" height="1" fill="#e9e9e9"/><rect x="67.8" y="342.22" width="4.0" height="1" fill="#e9e9e9"/><rect x="53.5" y="352.80" width="18.3" height="1" fill="#e4e4e4"/><rect x="67.8" y="363.38" width="4.0" height="1" fill="#e9e9e9"/><rect x="67.8" y="373.96" width="4.0" height="1" fill="#e9e9e9"/><rect x="67.8" y="384.54" width="4.0" height="1" fill="#e9e9e9"/><rect x="65.8" y="395.12" width="6.0" height="1" fill="#e6e6e6"/><rect x="67.8" y="405.71" width="4.0" height="1" fill="#e9e9e9"/><rect x="67.8" y="416.29" width="4.0" height="1" fill="#e9e9e9"/><rect x="67.8" y="426.87" width="4.0" height="1" fill="#e9e9e9"/><rect x="53.5" y="437.45" width="18.3" height="1" fill="#e4e4e4"/><rect x="67.8" y="448.03" width="4.0" height="1" fill="#e9e9e9"/><rect x="67.8" y="458.61" width="4.0" height="1" fill="#e9e9e9"/><rect x="67.8" y="469.19" width="4.0" height="1" fill="#e9e9e9"/><rect x="65.8" y="479.78" width="6.0" height="1" fill="#e6e6e6"/><rect x="67.8" y="490.36" width="4.0" height="1" fill="#e9e9e9"/><rect x="67.8" y="500.94" width="4.0" height="1" fill="#e9e9e9"/><rect x="67.8" y="511.52" width="4.0" height="1" fill="#e9e9e9"/><rect x="53.5" y="522.10" width="18.3" height="1" fill="#e4e4e4"/><rect x="67.8" y="532.68" width="4.0" height="1" fill="#e9e9e9"/><rect x="67.8" y="543.26" width="4.0" height="1" fill="#e9e9e9"/><rect x="67.8" y="553.84" width="4.0" height="1" fill="#e9e9e9"/><rect x="65.8" y="564.42" width="6.0" height="1" fill="#e6e6e6"/><rect x="67.8" y="575.01" width="4.0" height="1" fill="#e9e9e9"/><rect x="67.8" y="585.59" width="4.0" height="1" fill="#e9e9e9"/><rect x="67.8" y="596.17" width="4.0" height="1" fill="#e9e9e9"/><rect x="53.5" y="606.75" width="18.3" height="1" fill="#e4e4e4"/><rect x="67.8" y="617.33" width="4.0" height="1" fill="#e9e9e9"/><rect x="67.8" y="627.91" width="4.0" height="1" fill="#e9e9e9"/><rect x="67.8" y="638.49" width="4.0" height="1" fill="#e9e9e9"/><rect x="65.8" y="649.08" width="6.0" height="1" fill="#e6e6e6"/><rect x="67.8" y="659.66" width="4.0" height="1" fill="#e9e9e9"/><rect x="67.8" y="670.24" width="4.0" height="1" fill="#e9e9e9"/><rect x="67.8" y="680.82" width="4.0" height="1" fill="#e9e9e9"/><rect x="53.5" y="691.40" width="18.3" height="1" fill="#e4e4e4"/><rect x="67.8" y="701.98" width="4.0" height="1" fill="#e9e9e9"/><rect x="67.8" y="712.56" width="4.0" height="1" fill="#e9e9e9"/><rect x="67.8" y="723.14" width="4.0" height="1" fill="#e9e9e9"/><rect x="65.8" y="733.73" width="6.0" height="1" fill="#e6e6e6"/><rect x="67.8" y="744.31" width="4.0" height="1" fill="#e9e9e9"/><rect x="67.8" y="754.89" width="4.0" height="1" fill="#e9e9e9"/><rect x="67.8" y="765.47" width="4.0" height="1" fill="#e9e9e9"/><rect x="53.5" y="776.05" width="18.3" height="1" fill="#e4e4e4"/><rect x="67.8" y="786.63" width="4.0" height="1" fill="#e9e9e9"/><rect x="67.8" y="797.21" width="4.0" height="1" fill="#e9e9e9"/><rect x="67.8" y="807.79" width="4.0" height="1" fill="#e9e9e9"/><rect x="65.8" y="818.38" width="6.0" height="1" fill="#e6e6e6"/><rect x="67.8" y="828.96" width="4.0" height="1" fill="#e9e9e9"/></svg><div style="position:absolute;left:55.4px;top:187.1px;font-size:8.8px;line-height:1;letter-spacing:-0.2px;color:#808080;transform-origin:0 0;transform:rotate(-90deg) translateX(-100%);white-space:nowrap;">9</div><div style="position:absolute;left:55.4px;top:271.8px;font-size:8.8px;line-height:1;letter-spacing:-0.2px;color:#808080;transform-origin:0 0;transform:rotate(-90deg) translateX(-100%);white-space:nowrap;">10</div><div style="position:absolute;left:55.4px;top:356.4px;font-size:8.8px;line-height:1;letter-spacing:-0.2px;color:#808080;transform-origin:0 0;transform:rotate(-90deg) translateX(-100%);white-space:nowrap;">11</div><div style="position:absolute;left:55.4px;top:441.1px;font-size:8.8px;line-height:1;letter-spacing:-0.2px;color:#808080;transform-origin:0 0;transform:rotate(-90deg) translateX(-100%);white-space:nowrap;">12</div><div style="position:absolute;left:55.4px;top:525.7px;font-size:8.8px;line-height:1;letter-spacing:-0.2px;color:#808080;transform-origin:0 0;transform:rotate(-90deg) translateX(-100%);white-space:nowrap;">13</div><div style="position:absolute;left:55.4px;top:610.4px;font-size:8.8px;line-height:1;letter-spacing:-0.2px;color:#808080;transform-origin:0 0;transform:rotate(-90deg) translateX(-100%);white-space:nowrap;">14</div><div style="position:absolute;left:55.4px;top:695.0px;font-size:8.8px;line-height:1;letter-spacing:-0.2px;color:#808080;transform-origin:0 0;transform:rotate(-90deg) translateX(-100%);white-space:nowrap;">15</div><div style="position:absolute;left:55.4px;top:779.7px;font-size:8.8px;line-height:1;letter-spacing:-0.2px;color:#808080;transform-origin:0 0;transform:rotate(-90deg) translateX(-100%);white-space:nowrap;">16</div><div style="position:absolute;left:53.5px;top:121px;width:18.3px;height:18.5px;background:#f3f3f3;border-right:1px solid #e9e9e9;border-bottom:1px solid #e9e9e9;box-sizing:border-box;"></div>
<svg id="art" width="1500" height="840" viewBox="0 0 1500 840">
<path d="M565.0 423.0C567.5 415.9 569.5 403.3 575.0 395.0C580.8 386.2 590.0 376.2 600.0 370.0C610.8 363.3 626.0 357.8 640.0 355.0C655.0 352.0 673.3 351.2 690.0 352.0C706.7 352.8 726.7 356.2 740.0 360.0C750.7 363.1 762.5 370.4 770.0 375.0C775.6 378.4 780.6 382.7 785.0 387.5C789.6 392.5 793.8 398.9 797.5 405.0C801.2 411.2 804.8 418.3 807.5 425.0C810.1 431.5 812.0 438.8 813.8 445.0C815.3 450.6 817.3 459.2 818.0 462.0C823.3 461.8 841.8 460.9 850.0 460.5C855.8 460.2 861.7 459.0 867.5 459.5C873.3 460.0 880.0 461.6 885.0 463.8C889.7 465.8 894.7 469.0 897.5 472.5C900.3 476.0 901.8 480.6 902.0 485.0C902.2 489.6 901.1 495.5 898.8 500.0C895.9 505.4 890.5 512.6 885.0 517.5C879.4 522.5 872.0 526.5 865.0 530.0C857.9 533.5 850.0 536.2 842.5 538.8C835.1 541.2 823.8 544.0 820.0 545.0C820.4 549.2 821.5 561.7 822.5 570.0C823.5 578.8 824.7 588.4 826.2 597.5C827.9 607.1 830.4 618.3 832.5 627.5C834.4 635.9 836.5 644.6 838.8 652.5C840.9 660.1 844.0 668.3 846.2 675.0C848.3 680.9 851.0 687.5 852.5 692.5C853.8 696.6 855.3 701.3 855.5 705.0C855.6 708.2 855.2 712.1 853.5 714.5C851.8 716.9 848.3 719.0 845.0 719.5C841.1 720.1 835.0 718.5 830.0 718.0C825.0 717.5 820.0 716.1 815.0 716.2C810.0 716.4 804.2 717.3 800.0 718.8C796.3 720.0 792.9 722.7 790.0 725.0C787.2 727.2 785.0 730.0 782.5 732.5C779.6 735.3 776.2 739.5 772.5 742.0C768.8 744.5 764.4 746.5 760.0 747.5C755.4 748.5 749.7 748.4 745.0 748.0C740.6 747.6 735.3 745.9 732.0 745.0C729.6 744.3 727.2 743.7 725.0 742.5C722.5 741.1 719.9 738.1 717.0 736.5C713.3 734.5 707.9 731.9 703.0 730.5C697.7 729.0 690.8 727.4 685.0 727.3C679.3 727.2 673.0 728.3 668.0 729.7C663.4 731.0 659.2 733.3 655.0 735.5C650.7 737.8 646.7 741.5 642.0 743.5C637.0 745.6 630.8 747.5 625.0 748.0C619.2 748.5 612.5 747.6 607.5 746.2C603.0 745.0 598.7 742.9 595.0 740.0C591.2 737.1 588.3 732.1 585.0 728.8C581.9 725.6 579.0 722.0 575.0 720.0C570.8 717.9 565.2 716.3 560.0 716.2C554.2 716.2 545.8 718.9 540.0 719.5C535.0 720.0 528.8 720.5 525.0 720.0C522.2 719.6 519.2 718.3 517.5 716.2C515.8 714.2 514.5 710.6 514.5 707.5C514.5 704.0 516.4 699.5 517.5 695.5C520.1 685.9 527.2 665.5 530.0 650.0C532.9 634.1 533.3 615.0 535.0 600.0C536.5 586.6 537.9 569.8 540.0 560.0C541.4 553.4 546.2 544.4 547.5 541.2C546.2 540.8 542.5 539.4 540.0 538.8C535.4 537.5 526.5 536.0 520.0 533.8C513.3 531.5 506.2 528.3 500.0 525.0C493.9 521.7 487.5 517.9 482.5 513.8C477.7 509.8 472.6 504.6 470.0 500.0C467.7 495.9 467.2 490.0 467.0 486.2C466.8 483.3 467.3 480.1 468.8 477.5C470.5 474.4 473.8 470.0 477.5 467.5C481.5 464.8 487.2 462.6 492.5 461.2C498.3 459.8 505.8 458.9 512.5 458.8C520.0 458.5 530.4 459.4 537.5 460.0C543.4 460.5 552.1 462.1 555.0 462.5C555.8 458.3 558.3 444.1 560.0 437.5C561.3 432.5 563.3 427.8 565.0 423.0Z" fill="#000"/>
<circle cx="632" cy="444.5" r="7.8" fill="#fff"/><circle cx="716.3" cy="445.3" r="7.8" fill="#fff"/>
<path d="M586.5 158.5C590.7 158.3 595.9 160.2 600.0 162.5C606.4 166.1 617.1 173.6 625.0 180.0C633.3 186.7 642.1 195.4 650.0 202.5C657.5 209.2 666.2 215.4 672.5 222.5C678.5 229.3 683.3 237.0 687.5 245.0C692.1 253.6 696.1 264.8 700.0 274.0C703.7 282.7 708.8 295.2 711.0 300.0C711.5 301.1 713.1 302.1 713.5 302.5C715.8 308.1 725.2 330.4 727.5 336.0C732.9 336.7 749.6 338.8 760.0 340.0C770.0 341.2 782.8 342.5 790.0 343.5C794.4 344.1 799.7 345.1 803.0 346.0C805.4 346.7 808.8 348.5 810.0 349.0C808.8 350.4 805.5 355.3 802.5 357.5C798.3 360.6 790.4 364.6 785.0 367.5C780.1 370.2 775.0 372.5 770.0 375.0C763.8 378.1 755.2 382.8 747.5 386.2C739.6 389.8 730.8 393.3 722.5 396.2C714.3 399.1 705.8 401.5 697.5 403.8C689.2 406.0 680.4 407.9 672.5 410.0C665.0 412.0 657.7 414.8 650.0 416.2C640.0 418.1 625.0 420.1 612.5 421.2C600.0 422.4 587.1 422.9 575.0 423.0C563.3 423.1 548.8 422.6 540.0 422.0C534.1 421.6 526.5 420.7 522.5 419.5C520.0 418.8 517.1 415.8 516.0 415.0C516.5 414.2 517.4 411.3 518.8 410.0C521.1 407.7 526.1 404.0 530.0 401.2C535.2 397.5 543.3 392.0 550.0 387.5C557.1 382.7 566.9 376.7 572.5 372.5C576.5 369.5 581.6 366.2 583.8 362.5C585.9 358.9 585.0 354.2 585.5 350.0C586.0 345.6 586.7 339.5 587.0 336.0C587.2 333.7 587.4 330.2 587.5 329.0C588.1 328.8 590.6 327.8 591.2 327.5C591.0 326.7 590.4 324.2 590.0 322.5C589.4 320.0 587.7 315.4 587.5 312.5C587.3 310.0 588.7 307.5 588.8 305.0C588.8 301.7 587.6 296.7 588.0 292.5C588.4 288.3 589.6 284.0 591.2 280.0C593.0 275.8 597.5 271.7 598.5 267.5C599.5 263.4 598.7 259.0 597.5 255.0C596.1 250.4 592.9 244.6 590.0 240.0C587.1 235.5 582.2 231.7 580.0 227.5C577.9 223.7 577.1 217.1 576.5 215.0C576.4 216.2 575.7 220.0 575.8 222.5C575.8 225.4 577.5 230.0 577.0 232.5C576.5 234.7 574.4 236.3 572.5 237.5C570.1 239.0 565.9 240.3 562.5 241.2C558.8 242.3 554.0 242.3 550.0 243.8C545.8 245.2 541.7 248.3 537.5 250.0C533.5 251.6 529.0 252.1 525.0 253.8C520.8 255.4 515.5 258.0 512.5 260.0C510.3 261.4 507.9 264.6 507.0 265.5C507.5 262.9 508.3 255.0 510.0 250.0C511.8 244.9 514.7 239.9 517.5 235.0C520.8 229.2 525.5 221.5 530.0 215.0C534.6 208.3 540.0 201.2 545.0 195.0C549.8 189.0 555.0 182.7 560.0 177.5C564.7 172.6 570.6 166.9 575.0 163.8C578.4 161.3 582.3 158.7 586.5 158.5Z" fill="#fdcd35" stroke="#a8892a" stroke-width="0.6"/>
<path fill-rule="evenodd" d="M421.0 561.0C423.2 557.4 425.7 552.7 428.0 548.5C430.7 543.7 433.7 537.3 437.0 532.0C440.7 526.0 444.9 518.2 450.0 512.5C455.1 506.8 461.7 501.2 467.5 497.5C472.8 494.1 478.8 491.4 485.0 490.0C491.2 488.5 498.3 488.1 505.0 488.8C511.7 489.4 519.2 491.5 525.0 493.8C530.4 495.9 535.5 498.9 540.0 502.5C545.0 506.5 550.4 512.1 555.0 517.5C559.6 522.9 563.8 529.1 567.5 535.0C571.2 540.8 574.7 548.3 577.5 553.0C579.6 556.5 582.3 559.5 584.5 563.0C586.8 566.7 589.5 570.7 591.2 575.0C593.4 580.3 596.0 588.3 597.5 595.0C598.9 601.6 599.8 608.3 600.0 615.0C600.2 621.7 600.0 628.4 598.8 635.0C597.5 641.7 595.6 648.8 592.5 655.0C589.4 661.2 585.0 667.5 580.0 672.5C575.0 677.5 568.9 681.8 562.5 685.0C555.8 688.3 547.7 690.8 540.0 692.5C532.1 694.2 523.4 695.2 515.0 695.5C505.8 695.8 494.9 695.6 485.0 694.5C475.0 693.4 464.2 691.8 455.0 688.8C446.2 685.8 436.7 681.0 430.0 676.2C424.0 671.9 419.0 666.0 415.0 660.0C411.0 654.0 408.0 647.1 406.2 640.0C404.5 632.9 404.3 625.0 404.5 617.5C404.7 609.6 405.8 600.4 407.5 592.5C409.2 584.8 412.8 575.2 415.0 570.0C416.4 566.7 419.1 564.1 421.0 561.0Z M451.2 548.8C453.1 545.6 457.6 535.4 462.5 530.0C467.7 524.2 476.2 517.1 482.5 513.8C487.8 510.9 494.2 509.8 500.0 510.0C505.8 510.2 512.1 512.3 517.5 515.0C523.3 517.9 530.0 523.1 535.0 527.5C539.7 531.6 544.7 537.6 547.5 541.2C549.4 543.7 551.2 547.9 552.0 549.2C547.5 548.8 533.7 547.0 525.0 546.2C516.7 545.5 508.3 544.6 500.0 544.5C491.7 544.4 483.1 544.8 475.0 545.5C467.0 546.2 455.2 548.2 451.2 548.8Z" fill="#fdcd35" stroke="#a8892a" stroke-width="0.6"/>
<path d="M904.3 186.0C903.4 188.4 900.8 195.8 898.7 200.6C895.6 207.4 887.9 222.6 885.8 227.0C888.3 224.4 895.5 216.1 900.8 211.2C906.0 206.3 914.5 199.8 917.3 197.5C916.5 200.3 914.3 208.9 912.3 214.5C910.1 220.6 905.5 230.7 904.1 233.9C907.4 229.8 917.1 217.2 924.0 209.3C931.0 201.3 942.3 189.9 946.0 186.0C945.3 189.6 943.4 200.5 941.6 207.6C939.8 214.8 936.2 225.8 935.1 229.4C937.5 225.0 944.2 211.4 949.3 203.0C954.3 194.6 962.9 182.8 965.6 178.7C965.4 184.7 966.3 202.7 964.2 214.5C962.1 226.6 954.8 244.9 952.9 251.0C955.2 247.0 962.3 234.5 966.6 227.0C970.7 220.0 976.9 209.5 978.9 206.0C978.4 211.9 978.2 229.9 975.8 241.6C973.4 253.5 966.4 271.5 964.5 277.5C966.8 274.8 973.6 266.8 978.2 261.5C982.9 256.1 990.1 247.6 992.5 244.8C992.6 250.7 993.5 270.8 993.2 280.0C993.0 286.7 991.8 293.4 990.5 300.0C989.2 306.7 987.5 313.6 985.5 320.0C983.6 326.3 981.0 333.6 978.8 338.6C977.1 342.6 974.9 346.6 972.5 350.0C970.2 353.2 967.5 356.2 964.5 358.8C961.4 361.6 957.6 364.1 954.0 366.5C950.5 368.8 946.7 371.1 943.0 372.9C939.4 374.7 935.6 376.1 932.0 377.5C928.5 378.9 925.0 380.2 921.4 381.4C917.6 382.7 911.1 384.6 909.0 385.3C909.0 386.5 909.4 390.3 908.8 392.5C908.1 394.7 906.8 397.1 905.0 398.8C903.1 400.4 900.2 402.1 897.5 402.5C894.8 402.9 890.2 401.5 888.8 401.2C888.5 402.3 887.7 406.5 887.5 407.5C888.0 411.2 890.0 426.2 890.5 430.0C888.8 430.0 881.8 430.0 880.0 430.0C879.2 427.9 876.2 419.6 875.5 417.5C874.2 419.0 868.8 424.8 867.5 426.2C865.4 430.6 858.8 445.2 855.0 452.5C851.9 458.5 848.0 464.0 845.0 470.0C841.7 476.7 838.3 485.0 835.0 492.5C831.7 500.0 828.2 507.4 825.0 515.0C821.7 522.9 818.5 531.7 815.0 540.0C810.8 550.0 804.7 563.2 800.0 575.0C795.0 587.5 789.6 602.1 785.0 615.0C780.6 627.4 776.5 640.0 772.5 652.5C768.3 665.4 763.3 681.7 760.0 692.5C757.4 700.8 754.8 711.5 752.5 717.5C751.0 721.5 748.8 726.2 746.2 728.8C744.0 731.0 740.4 733.1 737.5 732.5C734.6 731.9 730.8 728.2 728.8 725.0C726.6 721.7 725.1 716.9 724.5 712.5C723.8 707.5 723.8 700.8 724.5 695.0C725.4 687.9 727.7 678.2 730.0 670.0C732.6 660.8 736.6 650.0 740.0 640.0C743.8 629.2 748.3 616.7 752.5 605.0C756.7 593.3 760.8 580.8 765.0 570.0C768.9 559.9 773.3 549.2 777.5 540.0C781.4 531.5 786.2 522.9 790.0 515.0C793.5 507.6 796.7 500.0 800.0 492.5C803.3 485.0 806.6 477.5 810.0 470.0C813.8 461.7 818.6 451.8 822.5 442.5C826.7 432.5 832.9 415.4 835.0 410.0C834.6 410.0 832.9 410.0 832.5 410.0C830.4 409.0 822.1 404.8 820.0 403.8C820.4 401.9 822.1 394.4 822.5 392.5C820.6 392.9 813.1 394.6 811.2 395.0C810.4 394.0 807.1 389.8 806.2 388.8C810.2 385.6 826.0 373.1 830.0 370.0C829.4 369.4 826.9 367.9 826.2 366.2C825.4 364.2 824.4 360.2 825.0 357.5C825.6 354.8 828.2 352.0 830.0 350.0C831.7 348.2 835.0 346.2 836.0 345.5C835.5 343.8 833.8 338.6 833.0 335.0C832.2 331.1 831.4 326.4 831.0 322.0C830.5 317.0 829.8 310.7 830.0 305.0C830.2 298.0 830.9 288.2 832.5 280.0C834.2 271.7 836.7 262.9 840.0 255.0C843.3 247.1 847.9 239.6 852.5 232.5C857.0 225.5 862.1 218.3 867.5 212.5C872.7 206.9 878.9 201.9 885.0 197.5C891.1 193.1 901.1 187.9 904.3 186.0Z" fill="#fdcd35" stroke="#a8892a" stroke-width="0.6"/>
<path d="M678.8 445.8 H712.5 M698.3 425 V466.3" stroke="#7d7d7d" stroke-width="0.8" fill="none"/><rect x="404.3" y="158.5" width="589" height="574.5" fill="none" stroke="#9a9a9a" stroke-width="1.1"/><rect x="400.3" y="154.3" width="8" height="8" fill="#fff" stroke="#8f8f8f" stroke-width="1"/><rect x="988.8" y="154.3" width="8" height="8" fill="#fff" stroke="#8f8f8f" stroke-width="1"/><rect x="400.3" y="729" width="8" height="8" fill="#fff" stroke="#8f8f8f" stroke-width="1"/><rect x="988.8" y="729" width="8" height="8" fill="#fff" stroke="#8f8f8f" stroke-width="1"/>
</svg>
<div style="position:absolute;left:652.4px;top:739.7px;width:92.3px;height:15.5px;background:#2d2d2d;border-radius:2px;"></div><div style="position:absolute;left:698.6px;transform:translateX(-50%);top:743.41px;font-size:9.2px;line-height:1;color:#f4f4f4;font-weight:700;white-space:nowrap;letter-spacing:0.05px;">6.96&nbsp; in x 6.79&nbsp; in</div>
<div style="position:absolute;left:208.3px;top:127.6px;width:164.4px;height:209px;background:#fff;border-radius:3px;box-shadow:0 1px 7px rgba(0,0,0,0.28),0 0 1px rgba(0,0,0,0.2);"></div><div style="position:absolute;left:224px;top:148.17px;font-size:11.5px;line-height:1;color:#555;font-weight:400;white-space:nowrap;letter-spacing:0.05px;">Material colors</div><div style="position:absolute;left:224.0px;top:166.6px;width:13.9px;height:13.9px;background:#000000;border-radius:2.5px;"></div><div style="position:absolute;left:243.8px;top:166.6px;width:13.9px;height:13.9px;background:#f5f5f5;border-radius:2.5px;box-shadow:0 0 0 0.5px #eee;"></div><div style="position:absolute;left:263.6px;top:166.6px;width:13.9px;height:13.9px;background:#f0506e;border-radius:2.5px;"></div><div style="position:absolute;left:283.4px;top:166.6px;width:13.9px;height:13.9px;background:#f95b29;border-radius:2.5px;"></div><div style="position:absolute;left:303.2px;top:166.6px;width:13.9px;height:13.9px;background:#fb8c1c;border-radius:2.5px;"></div><div style="position:absolute;left:323.0px;top:166.6px;width:13.9px;height:13.9px;background:#3a10b5;border-radius:2.5px;"></div><div style="position:absolute;left:342.8px;top:166.6px;width:13.9px;height:13.9px;background:#fdcd35;border-radius:2.5px;"></div><div style="position:absolute;left:224.0px;top:186.1px;width:13.9px;height:13.9px;background:#3ecb2e;border-radius:2.5px;"></div><div style="position:absolute;left:243.8px;top:186.1px;width:13.9px;height:13.9px;background:#0b0b70;border-radius:2.5px;"></div><div style="position:absolute;left:263.6px;top:186.1px;width:13.9px;height:13.9px;background:#5c3a14;border-radius:2.5px;"></div><div style="position:absolute;left:283.4px;top:186.1px;width:13.9px;height:13.9px;background:#eba550;border-radius:2.5px;"></div><div style="position:absolute;left:303.2px;top:186.1px;width:13.9px;height:13.9px;background:#cf8432;border-radius:2.5px;"></div><div style="position:absolute;left:340.4px;top:164.2px;width:18.2px;height:18.2px;box-sizing:border-box;border:2px solid #2e8b47;border-radius:4.5px;"></div><div style="position:absolute;left:224.0px;top:213.7px;width:13.9px;height:13.9px;background:#ef9a9a;border-radius:2.5px;"></div><div style="position:absolute;left:243.8px;top:213.7px;width:13.9px;height:13.9px;background:#ce93d8;border-radius:2.5px;"></div><div style="position:absolute;left:263.6px;top:213.7px;width:13.9px;height:13.9px;background:#9fa8da;border-radius:2.5px;"></div><div style="position:absolute;left:283.4px;top:213.7px;width:13.9px;height:13.9px;background:#90caf9;border-radius:2.5px;"></div><div style="position:absolute;left:303.2px;top:213.7px;width:13.9px;height:13.9px;background:#a5d6a7;border-radius:2.5px;"></div><div style="position:absolute;left:323.0px;top:213.7px;width:13.9px;height:13.9px;background:#fff59d;border-radius:2.5px;"></div><div style="position:absolute;left:342.8px;top:213.7px;width:13.9px;height:13.9px;background:#ffcc80;border-radius:2.5px;"></div><div style="position:absolute;left:224.0px;top:233.29999999999998px;width:13.9px;height:13.9px;background:#f4282d;border-radius:2.5px;"></div><div style="position:absolute;left:243.8px;top:233.29999999999998px;width:13.9px;height:13.9px;background:#9c1fb3;border-radius:2.5px;"></div><div style="position:absolute;left:263.6px;top:233.29999999999998px;width:13.9px;height:13.9px;background:#2f55b8;border-radius:2.5px;"></div><div style="position:absolute;left:283.4px;top:233.29999999999998px;width:13.9px;height:13.9px;background:#0d94f0;border-radius:2.5px;"></div><div style="position:absolute;left:303.2px;top:233.29999999999998px;width:13.9px;height:13.9px;background:#3fa84c;border-radius:2.5px;"></div><div style="position:absolute;left:323.0px;top:233.29999999999998px;width:13.9px;height:13.9px;background:#ffe13b;border-radius:2.5px;"></div><div style="position:absolute;left:342.8px;top:233.29999999999998px;width:13.9px;height:13.9px;background:#fd9017;border-radius:2.5px;"></div><div style="position:absolute;left:224.0px;top:252.89999999999998px;width:13.9px;height:13.9px;background:#b80f1c;border-radius:2.5px;"></div><div style="position:absolute;left:243.8px;top:252.89999999999998px;width:13.9px;height:13.9px;background:#44149a;border-radius:2.5px;"></div><div style="position:absolute;left:263.6px;top:252.89999999999998px;width:13.9px;height:13.9px;background:#17237e;border-radius:2.5px;"></div><div style="position:absolute;left:283.4px;top:252.89999999999998px;width:13.9px;height:13.9px;background:#0b4ca1;border-radius:2.5px;"></div><div style="position:absolute;left:303.2px;top:252.89999999999998px;width:13.9px;height:13.9px;background:#1a5e20;border-radius:2.5px;"></div><div style="position:absolute;left:323.0px;top:252.89999999999998px;width:13.9px;height:13.9px;background:#fbb93a;border-radius:2.5px;"></div><div style="position:absolute;left:342.8px;top:252.89999999999998px;width:13.9px;height:13.9px;background:#e8520f;border-radius:2.5px;"></div><div style="position:absolute;left:224.0px;top:272.5px;width:13.9px;height:13.9px;background:#ffffff;border-radius:2.5px;box-shadow:0 0 0 0.6px #e6e6e6;"></div><div style="position:absolute;left:243.8px;top:272.5px;width:13.9px;height:13.9px;background:#c8c8c8;border-radius:2.5px;"></div><div style="position:absolute;left:263.6px;top:272.5px;width:13.9px;height:13.9px;background:#9a9a9a;border-radius:2.5px;"></div><div style="position:absolute;left:283.4px;top:272.5px;width:13.9px;height:13.9px;background:#6a6a6a;border-radius:2.5px;"></div><div style="position:absolute;left:303.2px;top:272.5px;width:13.9px;height:13.9px;background:#3a3a3a;border-radius:2.5px;"></div><div style="position:absolute;left:323.0px;top:272.5px;width:13.9px;height:13.9px;background:#000000;border-radius:2.5px;"></div><div style="position:absolute;left:342.8px;top:272.5px;width:13.9px;height:13.9px;background:#8a5210;border-radius:2.5px;"></div><div style="position:absolute;left:224px;top:303.47px;font-size:11.5px;line-height:1;color:#555;font-weight:400;white-space:nowrap;">Advanced</div><svg style="position:absolute;left:340.2px;top:300.9px;" width="14.8" height="14.8" viewBox="0 0 14.8 14.8"><path d="M7.4 0.4 V14.4 M0.4 7.4 H14.4" stroke="#333" stroke-width="1.2" fill="none"/></svg><svg style="position:absolute;left:241px;top:185px;" width="26" height="34" viewBox="0 0 26 34"><path d="M8.4 3.3 Q8.4 1 10.75 1 Q13.1 1 13.1 3.3 V10.4 Q13.6 9.3 15.2 9.4 Q16.9 9.6 17.1 11.2 Q17.6 10.3 18.9 10.4 Q20.5 10.6 20.6 12.3 Q21.2 11.6 22.4 11.8 Q24.3 12.2 24.3 14.4 V21 Q24.3 25.6 21.8 29 Q19.4 32.6 15.8 32.6 Q12 32.6 9 29.4 L1.5 21.6 Q0.2 19.9 1.5 18.8 Q2.9 17.9 4.5 19.1 L8.4 22.2 Z" fill="#0a0a0a" stroke="#fff" stroke-width="1.5" stroke-linejoin="round"/><path d="M13.45 11 V16.6 M17.2 11.8 V16.8 M20.7 12.8 V16.8" stroke="#fff" stroke-width="0.9" fill="none"/></svg>
<div style="position:absolute;left:1250px;top:121.8px;width:14.5px;height:708.8px;background:#f1f1f1;"></div><div style="position:absolute;left:1251.3px;top:156.8px;width:11.5px;height:22.8px;background:#c0c0c0;"></div><div style="position:absolute;left:53.5px;top:830.5px;width:1197px;height:9.5px;background:#ededed;"></div><div style="position:absolute;left:82.5px;top:830.5px;width:65px;height:9.5px;background:#dcdcdc;"></div><div style="position:absolute;left:147.5px;top:830.5px;width:186.5px;height:9.5px;background:#f3f3f3;"></div><div style="position:absolute;left:1250px;top:830.5px;width:14.5px;height:9.5px;background:#dcdcdc;"></div><svg style="position:absolute;left:0px;top:0px;pointer-events:none;" width="1500" height="840" viewBox="0 0 1500 840"><path d="M1254 130.1 L1257 126.7 L1260 130.1 Z" fill="#505050"/><path d="M1254 821.4 L1257 824.8 L1260 821.4 Z" fill="#505050"/><path d="M61.4 833.5 L58.0 836.5 L61.4 839.5 Z" fill="#8a8a8a"/><path d="M1242.0 833.5 L1245.3999999999999 836.5 L1242.0 839.5 Z" fill="#333"/></svg>
<div style="position:absolute;left:1265px;top:84px;width:235px;height:756px;background:#fff;"></div><div style="position:absolute;left:1264.6px;top:84px;width:1px;height:756px;background:#e6e6e6;"></div><div style="position:absolute;left:1280px;top:95.14px;font-size:12px;line-height:1;color:#0a8060;font-weight:700;white-space:nowrap;letter-spacing:-1px;">Layers</div><div style="position:absolute;left:1338.6px;top:95.44px;font-size:12px;line-height:1;color:#555;font-weight:400;white-space:nowrap;letter-spacing:-0.32px;">Color Sync</div><div style="position:absolute;left:1265.5px;top:119px;width:234.5px;height:1px;background:#e8e8e8;"></div><div style="position:absolute;left:1267px;top:116.4px;width:59px;height:2.8px;background:#0a8060;border-radius:2px;"></div><svg style="position:absolute;left:1281px;top:130.6px;" width="15" height="15" viewBox="0 0 15 15"><path d="M0.6 3.6 V1.8 Q0.6 0.6 1.8 0.6 H3.6 M11.4 0.6 H13.2 Q14.4 0.6 14.4 1.8 V3.6 M14.4 11.4 V13.2 Q14.4 14.4 13.2 14.4 H11.4 M3.6 14.4 H1.8 Q0.6 14.4 0.6 13.2 V11.4" fill="none" stroke="#e4e4e4" stroke-width="1.1"/><circle cx="7" cy="7" r="3.6" fill="none" stroke="#e4e4e4" stroke-width="1.1"/><path d="M9.6 9.6 L12 12" stroke="#e4e4e4" stroke-width="1.1"/></svg><svg style="position:absolute;left:1312.4px;top:131px;" width="15.4" height="15.4" viewBox="0 0 15.4 15.4"><rect x="0.7" y="0.7" width="10" height="10" rx="1.4" class="ic" stroke="#222" stroke-width="1.2"/><rect x="4.6" y="4.6" width="10" height="10" rx="1.4" class="ic" style="fill:#fff" stroke="#222" stroke-width="1.2" fill="#fff"/><path d="M9.6 7 V12.2 M7 9.6 H12.2" class="ic" stroke="#222" stroke-width="1.2"/></svg><svg style="position:absolute;left:1344px;top:130.6px;" width="15" height="15" viewBox="0 0 15 15"><path d="M0.8 3.4 H14.2 M5 3.2 V1.8 Q5 0.8 6 0.8 H9 Q10 0.8 10 1.8 V3.2" class="ic" stroke="#222" stroke-width="1.2"/><path d="M2.4 3.6 L3 12.8 Q3.1 14.2 4.5 14.2 H10.5 Q11.9 14.2 12 12.8 L12.6 3.6" class="ic" stroke="#222" stroke-width="1.2"/><path d="M6 6.4 V11.2 M9 6.4 V11.2" class="ic" stroke="#222" stroke-width="1.2"/></svg><div style="position:absolute;left:1265.5px;top:156.5px;width:234.5px;height:1px;background:#ececec;"></div><div style="position:absolute;left:0;top:157.5px;width:1488.5px;height:608.8px;overflow:hidden;"><div style="position:absolute;left:0;top:-157.5px;width:1500px;height:840px;"><svg style="position:absolute;left:1294.5px;top:171.6px;" width="20" height="20" viewBox="0 0 20 20"><path d="M4.6 13.6 Q8.2 10.6 8.6 5 Q9 3.4 10.2 3.6 Q11.6 8.6 15 13.4 Q9.6 16 3.2 15.4 Z" fill="none" stroke="#dcdcdc" stroke-width="0.9"/><path d="M15.4 3 L17.8 4.2 Q17.6 6.8 15.8 7.6 L12.4 13 L11.4 12.4 L14 7 Q13.6 4.6 15.4 3 Z" fill="none" stroke="#dcdcdc" stroke-width="0.9"/></svg><div style="position:absolute;left:1320.6px;top:168.59px;font-size:11px;line-height:1;color:#c6c6c6;font-weight:400;white-space:nowrap;">Weld Result</div><div style="position:absolute;left:1320.6px;top:184.09px;font-size:11px;line-height:1;color:#d2d2d2;font-weight:400;white-space:nowrap;">Basic Cut</div><svg style="position:absolute;left:1442px;top:176.4px;" width="12" height="10.4" viewBox="0 0 12 10.4"><path d="M1 5.2 Q6 -1.2 11 5.2 Q6 11.6 1 5.2 Z" fill="none" stroke="#b8b8b8" stroke-width="1"/><circle cx="6" cy="5.2" r="1.7" fill="none" stroke="#b8b8b8" stroke-width="0.9"/><path d="M1.8 0.4 L10.4 10" stroke="#fff" stroke-width="2.4"/><path d="M2.2 0.6 L10 9.6" stroke="#b8b8b8" stroke-width="1" stroke-linecap="round"/></svg><div style="position:absolute;left:1270.4px;top:205.85000000000002px;width:214.6px;height:43.2px;background:#b8eddd;border-radius:3px;"></div><svg style="position:absolute;left:1294.5px;top:217.05px;" width="20" height="20" viewBox="0 0 20 20"><path d="M6.2 3.6 Q8.6 3.4 10 6.4 L12.6 7.8 Q9.4 9.4 5.4 8.6 Q7.4 7.2 7.2 5.6 Q6.8 4.6 6.2 3.6 Z" fill="#fdcd35" stroke="#3d3208" stroke-width="0.8"/><path d="M15.2 2.6 L18.2 3.8 Q18.6 6.6 16.4 7.8 L10.4 18 Q9.6 18.8 9 17.8 L14 7.4 Q13.4 4.4 15.2 2.6 Z" fill="#fdcd35" stroke="#3d3208" stroke-width="0.8"/><path d="M2.2 14.6 Q1 11.8 3.6 10.4 Q5.6 9.8 6.8 11.8 Q8 14.2 6.2 15.4 Q3.8 16.4 2.2 14.6 Z" fill="#fdcd35" stroke="#3d3208" stroke-width="0.8"/><circle cx="16.6" cy="4.2" r="1.1" fill="#222"/></svg><div style="position:absolute;left:1320.6px;top:214.38px;font-size:10.6px;line-height:1;color:#1c1c1c;font-weight:700;white-space:nowrap;">Weld Result</div><div style="position:absolute;left:1320.6px;top:229.54px;font-size:11px;line-height:1;color:#666;font-weight:400;white-space:nowrap;">Basic Cut</div><svg style="position:absolute;left:1294.5px;top:262.5px;" width="20" height="20" viewBox="0 0 20 20"><path d="M6.2 3.6 Q8.6 3.4 10 6.4 L12.6 7.8 Q9.4 9.4 5.4 8.6 Q7.4 7.2 7.2 5.6 Z" fill="none" stroke="#d6d6d6" stroke-width="0.9"/><path d="M15.2 2.6 L18.2 3.8 Q18.6 6.6 16.4 7.8 L10.4 18 Q9.6 18.8 9 17.8 L14 7.4 Q13.4 4.4 15.2 2.6 Z" fill="none" stroke="#d6d6d6" stroke-width="0.9"/><rect x="2.2" y="11.4" width="4.6" height="4.4" rx="1.2" fill="none" stroke="#d6d6d6" stroke-width="0.9"/></svg><div style="position:absolute;left:1320.6px;top:259.49px;font-size:11px;line-height:1;color:#c6c6c6;font-weight:400;white-space:nowrap;">Weld Result</div><div style="position:absolute;left:1320.6px;top:274.99px;font-size:11px;line-height:1;color:#d2d2d2;font-weight:400;white-space:nowrap;">Basic Cut</div><svg style="position:absolute;left:1442px;top:267.3px;" width="12" height="10.4" viewBox="0 0 12 10.4"><path d="M1 5.2 Q6 -1.2 11 5.2 Q6 11.6 1 5.2 Z" fill="none" stroke="#b8b8b8" stroke-width="1"/><circle cx="6" cy="5.2" r="1.7" fill="none" stroke="#b8b8b8" stroke-width="0.9"/><path d="M1.8 0.4 L10.4 10" stroke="#fff" stroke-width="2.4"/><path d="M2.2 0.6 L10 9.6" stroke="#b8b8b8" stroke-width="1" stroke-linecap="round"/></svg><svg style="position:absolute;left:1280.4px;top:314.35px;" width="5.4" height="7.2" viewBox="0 0 5.4 7.2"><path d="M0.8 0.7 L4.4 3.6 L0.8 6.5" fill="none" stroke="#c4c4c4" stroke-width="1.2" stroke-linecap="round" stroke-linejoin="round"/></svg><svg style="position:absolute;left:1294.5px;top:307.95000000000005px;" width="20" height="20" viewBox="0 0 20 20"><path d="M12.6 1.2 Q15.4 1.4 14.8 4.4 Q14.2 7 12.4 7.6 L8.2 18 L7.2 17.6 L10.8 7.2 Q10 3 12.6 1.2 Z" fill="#c9c9c9" stroke="#a8a8a8" stroke-width="0.6"/></svg><div style="position:absolute;left:1320.6px;top:312.64px;font-size:11px;line-height:1;color:#bcbcbc;font-weight:400;white-space:nowrap;letter-spacing:0.2px;">svg-01-build-a-ghost...</div><svg style="position:absolute;left:1442px;top:312.75000000000006px;" width="12" height="10.4" viewBox="0 0 12 10.4"><path d="M1 5.2 Q6 -1.2 11 5.2 Q6 11.6 1 5.2 Z" fill="none" stroke="#b8b8b8" stroke-width="1"/><circle cx="6" cy="5.2" r="1.7" fill="none" stroke="#b8b8b8" stroke-width="0.9"/><path d="M1.8 0.4 L10.4 10" stroke="#fff" stroke-width="2.4"/><path d="M2.2 0.6 L10 9.6" stroke="#b8b8b8" stroke-width="1" stroke-linecap="round"/></svg><svg style="position:absolute;left:1280.4px;top:359.79999999999995px;" width="5.4" height="7.2" viewBox="0 0 5.4 7.2"><path d="M0.8 0.7 L4.4 3.6 L0.8 6.5" fill="none" stroke="#c4c4c4" stroke-width="1.2" stroke-linecap="round" stroke-linejoin="round"/></svg><svg style="position:absolute;left:1294.5px;top:353.4px;" width="20" height="20" viewBox="0 0 20 20"><path d="M2.4 13 Q2 8.6 5 6.6 Q5.6 2.6 10 2.6 Q14.4 2.6 15 6.6 Q18 8.6 17.6 13 Q17 17.4 10 17.4 Q3 17.4 2.4 13 Z" fill="#d2d2d2" stroke="#b2b2b2" stroke-width="0.7"/><path d="M6.6 6.4 Q7 4.2 10 4.2 Q13 4.2 13.4 6.4 Q10 5.6 6.6 6.4 Z" fill="#fff" stroke="#b2b2b2" stroke-width="0.5"/><path d="M6.4 10 L8.2 10.8 M13.6 10 L11.8 10.8 M7.6 13.6 Q10 15 12.4 13.6" stroke="#aaa" stroke-width="0.7" fill="none"/></svg><div style="position:absolute;left:1320.6px;top:358.09px;font-size:11px;line-height:1;color:#bcbcbc;font-weight:400;white-space:nowrap;letter-spacing:0.2px;">svg-01-build-a-ghost...</div><svg style="position:absolute;left:1442px;top:358.2px;" width="12" height="10.4" viewBox="0 0 12 10.4"><path d="M1 5.2 Q6 -1.2 11 5.2 Q6 11.6 1 5.2 Z" fill="none" stroke="#b8b8b8" stroke-width="1"/><circle cx="6" cy="5.2" r="1.7" fill="none" stroke="#b8b8b8" stroke-width="0.9"/><path d="M1.8 0.4 L10.4 10" stroke="#fff" stroke-width="2.4"/><path d="M2.2 0.6 L10 9.6" stroke="#b8b8b8" stroke-width="1" stroke-linecap="round"/></svg><svg style="position:absolute;left:1280.4px;top:405.25px;" width="5.4" height="7.2" viewBox="0 0 5.4 7.2"><path d="M0.8 0.7 L4.4 3.6 L0.8 6.5" fill="none" stroke="#c4c4c4" stroke-width="1.2" stroke-linecap="round" stroke-linejoin="round"/></svg><svg style="position:absolute;left:1294.5px;top:398.85px;" width="20" height="20" viewBox="0 0 20 20"><path d="M7 2 Q11.6 1.4 13.6 9.6 L18.6 11.6 Q12 16 2.4 15.6 Q6 12.4 6.8 8 Q7 6.2 6.2 5 Q4.6 5.6 3.4 6.6 Q4.2 3 7 2 Z" fill="#bdbdbd" stroke="#9f9f9f" stroke-width="0.6"/><path d="M5.4 11.4 Q10 12.8 14.2 10.4" stroke="#e6e6e6" stroke-width="1" fill="none"/></svg><div style="position:absolute;left:1320.6px;top:403.54px;font-size:11px;line-height:1;color:#bcbcbc;font-weight:400;white-space:nowrap;letter-spacing:0.2px;">svg-01-build-a-ghost...</div><svg style="position:absolute;left:1442px;top:403.65000000000003px;" width="12" height="10.4" viewBox="0 0 12 10.4"><path d="M1 5.2 Q6 -1.2 11 5.2 Q6 11.6 1 5.2 Z" fill="none" stroke="#b8b8b8" stroke-width="1"/><circle cx="6" cy="5.2" r="1.7" fill="none" stroke="#b8b8b8" stroke-width="0.9"/><path d="M1.8 0.4 L10.4 10" stroke="#fff" stroke-width="2.4"/><path d="M2.2 0.6 L10 9.6" stroke="#b8b8b8" stroke-width="1" stroke-linecap="round"/></svg><svg style="position:absolute;left:1294.5px;top:444.30000000000007px;" width="20" height="20" viewBox="0 0 20 20"><path d="M10 2.4 Q14.4 2.4 14.8 7 Q17.6 6.6 18.4 8.2 Q17.4 10.6 15.2 10.8 Q15.6 14.6 16.6 16.4 Q15.6 17.4 14.2 16.8 Q13 18 11.6 17.2 Q10 18.2 8.6 17.2 Q7 18 5.8 16.8 Q4.4 17.4 3.4 16.4 Q4.4 14.6 4.8 10.8 Q2.6 10.6 1.6 8.2 Q2.4 6.6 5.2 7 Q5.6 2.4 10 2.4 Z" fill="none" stroke="#e6e6e6" stroke-width="1"/><circle cx="8.4" cy="7.4" r="0.6" fill="#e0e0e0"/><circle cx="11.6" cy="7.4" r="0.6" fill="#e0e0e0"/></svg><div style="position:absolute;left:1320.6px;top:441.29px;font-size:11px;line-height:1;color:#c2c2c2;font-weight:400;white-space:nowrap;letter-spacing:0.2px;">svg-01-build-a-ghost...</div><div style="position:absolute;left:1320.6px;top:456.79px;font-size:11px;line-height:1;color:#dadada;font-weight:400;white-space:nowrap;">Basic Cut</div><svg style="position:absolute;left:1442px;top:449.1000000000001px;" width="12" height="10.4" viewBox="0 0 12 10.4"><path d="M1 5.2 Q6 -1.2 11 5.2 Q6 11.6 1 5.2 Z" fill="none" stroke="#b8b8b8" stroke-width="1"/><circle cx="6" cy="5.2" r="1.7" fill="none" stroke="#b8b8b8" stroke-width="0.9"/><path d="M1.8 0.4 L10.4 10" stroke="#fff" stroke-width="2.4"/><path d="M2.2 0.6 L10 9.6" stroke="#b8b8b8" stroke-width="1" stroke-linecap="round"/></svg><svg style="position:absolute;left:1294.5px;top:489.75px;" width="20" height="20" viewBox="0 0 20 20"><path d="M10 2.4 Q14.4 2.4 14.8 7 Q17.6 6.6 18.4 8.2 Q17.4 10.6 15.2 10.8 Q15.6 14.6 16.6 16.4 Q15.6 17.4 14.2 16.8 Q13 18 11.6 17.2 Q10 18.2 8.6 17.2 Q7 18 5.8 16.8 Q4.4 17.4 3.4 16.4 Q4.4 14.6 4.8 10.8 Q2.6 10.6 1.6 8.2 Q2.4 6.6 5.2 7 Q5.6 2.4 10 2.4 Z" fill="#050505"/><circle cx="8.2" cy="7.6" r="0.55" fill="#fff"/><circle cx="11.4" cy="7.6" r="0.55" fill="#fff"/></svg><div style="position:absolute;left:1320.6px;top:486.74px;font-size:11px;line-height:1;color:#555;font-weight:400;white-space:nowrap;letter-spacing:0.2px;">svg-01-build-a-ghost-cr...</div><div style="position:absolute;left:1320.6px;top:502.24px;font-size:11px;line-height:1;color:#999;font-weight:400;white-space:nowrap;">Basic Cut</div><svg style="position:absolute;left:1280.4px;top:541.6px;" width="5.4" height="7.2" viewBox="0 0 5.4 7.2"><path d="M0.8 0.7 L4.4 3.6 L0.8 6.5" fill="none" stroke="#333" stroke-width="1.2" stroke-linecap="round" stroke-linejoin="round"/></svg><svg style="position:absolute;left:1294.5px;top:535.2px;" width="20" height="20" viewBox="0 0 20 20"><path d="M9.2 8 L16.6 1.6" stroke="#2a1a8c" stroke-width="1.5" stroke-linecap="round"/><path d="M4.2 7.4 Q9.4 5.4 14.6 7.4 Q15.4 8.4 14.8 9.2 Q17 12.6 14.4 15.8 L15 17.6 L13 17 Q9.4 18.2 5.8 17 L3.8 17.6 L4.4 15.8 Q1.8 12.6 4 9.2 Q3.4 8.4 4.2 7.4 Z" fill="#050505"/><path d="M6 7.6 Q8 7 9.6 7.4" stroke="#3ea83a" stroke-width="1" fill="none"/></svg><div style="position:absolute;left:1320.6px;top:539.89px;font-size:11px;line-height:1;color:#555;font-weight:400;white-space:nowrap;letter-spacing:0.2px;">svg-01-build-a-ghost-cr...</div><svg style="position:absolute;left:1280.4px;top:587.05px;" width="5.4" height="7.2" viewBox="0 0 5.4 7.2"><path d="M0.8 0.7 L4.4 3.6 L0.8 6.5" fill="none" stroke="#333" stroke-width="1.2" stroke-linecap="round" stroke-linejoin="round"/></svg><svg style="position:absolute;left:1294.5px;top:580.65px;" width="20" height="20" viewBox="0 0 20 20"><path d="M9.4 8 L11.4 17.4" stroke="#1b1f7a" stroke-width="1.4" stroke-linecap="round"/><path d="M9 1 L10.4 3.8 L13.4 4.2 L11.2 6.4 L11.8 9.4 L9 8 L6.2 9.4 L6.8 6.4 L4.6 4.2 L7.6 3.8 Z" fill="#fdd53a" stroke="#d8a514" stroke-width="0.5"/></svg><div style="position:absolute;left:1320.6px;top:585.34px;font-size:11px;line-height:1;color:#555;font-weight:400;white-space:nowrap;letter-spacing:0.2px;">svg-01-build-a-ghost-cr...</div><svg style="position:absolute;left:1280.4px;top:632.5px;" width="5.4" height="7.2" viewBox="0 0 5.4 7.2"><path d="M0.8 0.7 L4.4 3.6 L0.8 6.5" fill="none" stroke="#333" stroke-width="1.2" stroke-linecap="round" stroke-linejoin="round"/></svg><svg style="position:absolute;left:1294.5px;top:626.1px;" width="20" height="20" viewBox="0 0 20 20"><path d="M1.6 6.6 Q1 5.6 2.2 5.6 L8.6 8.4 L15.6 3.2 Q17.4 2.4 17.6 4 L18.4 10.4 Q18.4 12 16.8 11.6 L10.4 10.8 L4.2 15.8 Q2.8 16.6 2.6 15 Z" fill="#f4631e" stroke="#c44a10" stroke-width="0.5"/><circle cx="9.6" cy="9.6" r="1.7" fill="#f4631e" stroke="#c44a10" stroke-width="0.6"/></svg><div style="position:absolute;left:1320.6px;top:630.79px;font-size:11px;line-height:1;color:#555;font-weight:400;white-space:nowrap;letter-spacing:0.2px;">svg-01-build-a-ghost-cr...</div><svg style="position:absolute;left:1280.4px;top:677.95px;" width="5.4" height="7.2" viewBox="0 0 5.4 7.2"><path d="M0.8 0.7 L4.4 3.6 L0.8 6.5" fill="none" stroke="#333" stroke-width="1.2" stroke-linecap="round" stroke-linejoin="round"/></svg><svg style="position:absolute;left:1294.5px;top:671.5500000000001px;" width="20" height="20" viewBox="0 0 20 20"><path d="M2.2 14.6 Q3.6 12.6 3.8 9.6 Q4.6 3.4 10 3 Q14.6 3.2 15.8 7.6 Q18 8 18.4 9.6 Q17.2 11 16.4 11 Q16.8 13.6 17.8 15.2 Q16.6 16.6 15 15.6 Q11.6 14 8 14.6 Q4.8 16 2.2 14.6 Z" fill="#fff" stroke="#444" stroke-width="0.8"/><path d="M6.6 7.6 Q7.6 9 8.8 8 L10.2 6.6" stroke="#111" stroke-width="1.2" fill="none" stroke-linecap="round"/></svg><div style="position:absolute;left:1320.6px;top:676.24px;font-size:11px;line-height:1;color:#555;font-weight:400;white-space:nowrap;letter-spacing:0.2px;">svg-01-build-a-ghost-cr...</div><svg style="position:absolute;left:1280.4px;top:723.4000000000001px;" width="5.4" height="7.2" viewBox="0 0 5.4 7.2"><path d="M0.8 0.7 L4.4 3.6 L0.8 6.5" fill="none" stroke="#333" stroke-width="1.2" stroke-linecap="round" stroke-linejoin="round"/></svg><svg style="position:absolute;left:1294.5px;top:717.0000000000001px;" width="20" height="20" viewBox="0 0 20 20"><path d="M3 17 Q4.6 15.6 4.4 13 Q2.4 12.6 2.2 11 Q3.4 9.8 4.8 10 Q5.4 3.6 10.2 3 Q15.6 3.2 16.2 9.2 Q18.2 9.6 18.4 11.2 Q17.2 12.6 15.8 12.4 Q14.8 15.4 11.4 16.2 Q9.6 18.2 7.6 17 Q5.2 18.4 3 17 Z" fill="#fff" stroke="#444" stroke-width="0.8"/><path d="M7.6 7.4 Q8.6 8.8 9.6 7.8 Q10.6 8.8 11.6 7.4" stroke="#111" stroke-width="1.2" fill="none" stroke-linecap="round"/></svg><div style="position:absolute;left:1320.6px;top:721.69px;font-size:11px;line-height:1;color:#555;font-weight:400;white-space:nowrap;letter-spacing:0.2px;">svg-01-build-a-ghost-cr...</div><div style="position:absolute;left:1320.6px;top:759.44px;font-size:11px;line-height:1;color:#555;font-weight:400;white-space:nowrap;letter-spacing:0.2px;">svg-01-build-a-ghost-cr</div><div style="position:absolute;left:1320.6px;top:774.94px;font-size:11px;line-height:1;color:#999;font-weight:400;white-space:nowrap;">Basic Cut</div></div></div><div style="position:absolute;left:1488.5px;top:157.5px;width:11.5px;height:609px;background:#f1f1f1;"></div><div style="position:absolute;left:1489px;top:171.4px;width:11px;height:550px;background:#c0c0c0;"></div><svg style="position:absolute;left:0px;top:0px;pointer-events:none;" width="1500" height="840" viewBox="0 0 1500 840"><path d="M1491.4 166.6 L1494.4 163.2 L1497.4 166.6 Z" fill="#777"/><path d="M1491.4 758.0 L1494.4 761.4 L1497.4 758.0 Z" fill="#333"/></svg><div style="position:absolute;left:1265.5px;top:766.3px;width:234.5px;height:38.7px;background:#f2f2f2;"></div><div style="position:absolute;left:1274.3px;top:772px;width:42.2px;height:27.8px;box-sizing:border-box;background:#fff;border:1px solid #b9b9b9;border-radius:1.5px;"></div><div style="position:absolute;left:1324px;top:783.03px;font-size:8px;line-height:1;color:#666;font-weight:400;white-space:nowrap;">Blank Canvas</div><svg style="position:absolute;left:1287px;top:810px;" width="14.4" height="14" viewBox="0 0 14.4 14"><path d="M2.2 9.2 Q0.4 5.6 2.8 2.8 Q5.6 0.2 9 2 Q11 3.4 11.2 5.2" fill="none" stroke="#cfcfcf" stroke-width="1.1"/><rect x="5" y="5.2" width="8.6" height="8.2" rx="1" fill="none" stroke="#cfcfcf" stroke-width="1.1"/><circle cx="7" cy="7.2" r="2.6" fill="none" stroke="#cfcfcf" stroke-width="1"/></svg><div style="position:absolute;left:1293.8px;transform:translateX(-50%);top:829.93px;font-size:8px;line-height:1;color:#c9c9c9;font-weight:400;white-space:nowrap;">Slice</div><svg style="position:absolute;left:1328.2px;top:809.6px;" width="15" height="14.6" viewBox="0 0 15 14.6"><rect x="0.7" y="0.7" width="8.6" height="8.6" rx="1.2" fill="none" stroke="#cfcfcf" stroke-width="1.1"/><circle cx="9.4" cy="9.2" r="4.6" fill="none" stroke="#cfcfcf" stroke-width="1.1"/></svg><svg style="position:absolute;left:1347.6px;top:816.9000000000001px;" width="4.4" height="2.8" viewBox="0 0 4.4 2.8"><path d="M0 0 H4.4 L2.2 2.8 Z" fill="#bdbdbd"/></svg><div style="position:absolute;left:1339.4px;transform:translateX(-50%);top:829.93px;font-size:8px;line-height:1;color:#c9c9c9;font-weight:400;white-space:nowrap;">Combine</div><svg style="position:absolute;left:1376px;top:811.4px;" width="17" height="10.6" viewBox="0 0 17 10.6"><path d="M5.4 7.4 H12 Q14 7.4 14 5.4 Q14 3.4 12 3.4 H5 Q3 3.4 3 5.4" fill="none" stroke="#cfcfcf" stroke-width="1.1"/><path d="M12.6 9.8 H5.2 Q0.8 9.8 0.8 5.3 Q0.8 0.8 5.2 0.8 H12 Q16.2 0.8 16.2 5.3" fill="none" stroke="#cfcfcf" stroke-width="1.1"/></svg><div style="position:absolute;left:1384.6px;transform:translateX(-50%);top:829.93px;font-size:8px;line-height:1;color:#c9c9c9;font-weight:400;white-space:nowrap;">Attach</div><svg style="position:absolute;left:1421.6px;top:809.4px;" width="15" height="14.6" viewBox="0 0 15 14.6"><path d="M7.5 0.6 V5.4 M5.4 3.6 L7.5 5.8 L9.6 3.6" fill="none" stroke="#cfcfcf" stroke-width="1.1"/><path d="M1 6.6 L7.5 10.2 L14 6.6 M1 10 L7.5 13.6 L14 10" fill="none" stroke="#cfcfcf" stroke-width="1.1"/><path d="M3.4 5 L1 6.6 M11.6 5 L14 6.6" stroke="#cfcfcf" stroke-width="1" fill="none"/></svg><div style="position:absolute;left:1429px;transform:translateX(-50%);top:829.93px;font-size:8px;line-height:1;color:#c9c9c9;font-weight:400;white-space:nowrap;">Flatten</div><svg style="position:absolute;left:1466px;top:808px;" width="18" height="18" viewBox="0 0 18 18"><circle cx="9" cy="9" r="7.7" fill="none" stroke="#222" stroke-width="1.4" stroke-dasharray="3.4 2.65"/></svg><div style="position:absolute;left:1474.9px;transform:translateX(-50%);top:829.93px;font-size:8px;line-height:1;color:#333;font-weight:400;white-space:nowrap;">Contour</div>
<div style="position:absolute;left:53.5px;top:777px;width:18.3px;height:53.5px;background:rgba(255,255,255,0.55);"></div><div style="position:absolute;left:89px;top:797px;width:61px;height:26px;background:#f6f6f6;"></div><div style="position:absolute;left:13.8px;top:786.87px;font-size:41.5px;line-height:1;color:#1b6a82;font-weight:700;white-space:nowrap;font-family:&quot;Liberation Serif&quot;,&quot;DejaVu Serif&quot;,serif;-webkit-text-stroke:0.8px #1b6a82;letter-spacing:-2.4px;transform:scaleX(1.08);transform-origin:0 50%;">Craft</div><div style="position:absolute;left:119.6px;top:786.87px;font-size:41.5px;line-height:1;color:#1b6a82;font-weight:700;white-space:nowrap;font-family:&quot;Liberation Serif&quot;,&quot;DejaVu Serif&quot;,serif;-webkit-text-stroke:0.8px #1b6a82;letter-spacing:1.5px;transform:scaleX(1.08);transform-origin:0 50%;">with</div><div style="position:absolute;left:212.0px;top:786.87px;font-size:41.5px;line-height:1;color:#1b6a82;font-weight:700;white-space:nowrap;font-family:&quot;Liberation Serif&quot;,&quot;DejaVu Serif&quot;,serif;-webkit-text-stroke:0.8px #1b6a82;letter-spacing:-1.5px;transform:scaleX(1.08);transform-origin:0 50%;">Sarah</div>
</div>
</body></html>
